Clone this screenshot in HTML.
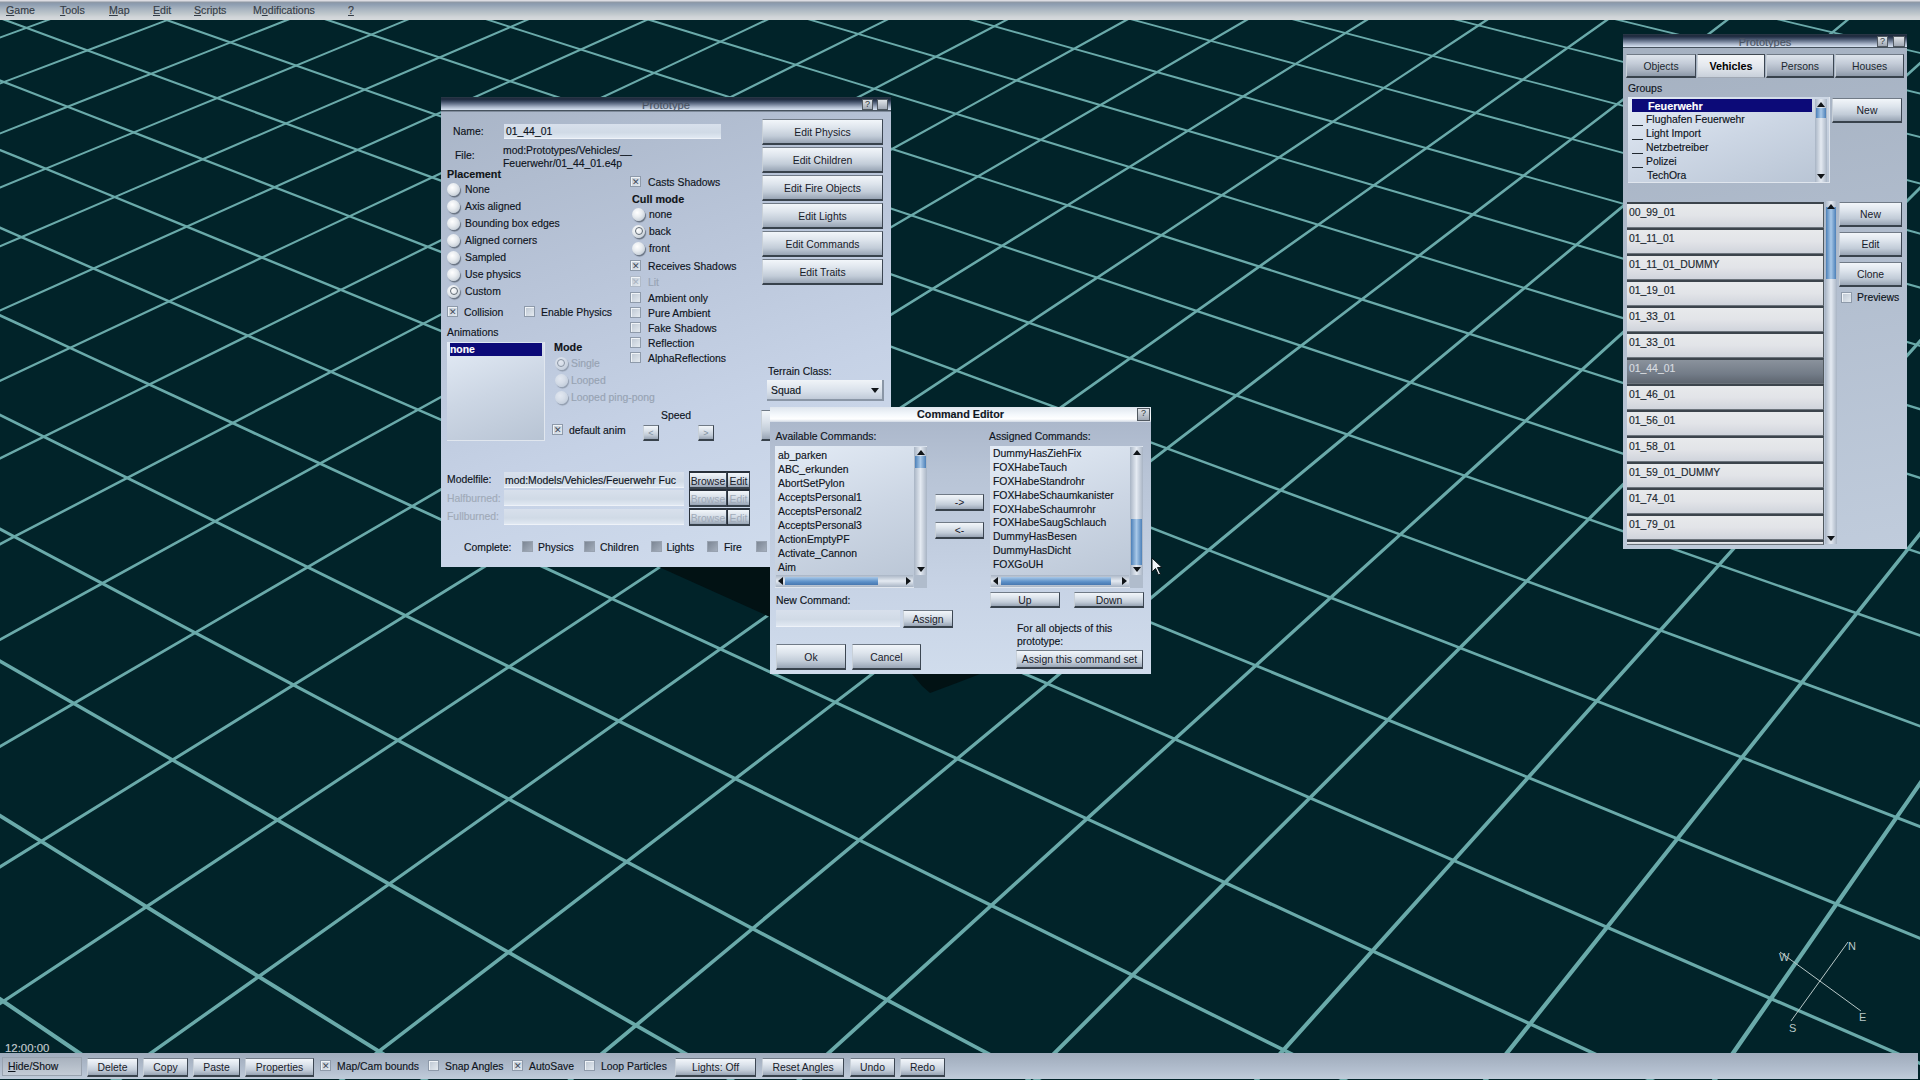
<!DOCTYPE html>
<html><head><meta charset="utf-8"><style>
*{margin:0;padding:0;box-sizing:border-box}
html,body{width:1920px;height:1080px;overflow:hidden;background:#012329;position:relative;font-family:"Liberation Sans",sans-serif;font-size:10.4px;color:#0e141c}
.t{-webkit-text-stroke:0.15px currentColor}
.t{position:absolute;white-space:nowrap}
.t u{text-decoration:underline}
div{position:absolute}
#menubar{left:0;top:0;width:1920px;height:20px;background:linear-gradient(to bottom,#dcdce2 0,#dcdce2 1px,#8e98a4 2px,#8c9cb0 4px,#a8b4c0 9px,#c0c8cc 14px,#d0d4d8 17px,#d6dadc 20px)}
.dlg{background:linear-gradient(160deg,#a8b4c6 0%,#b8c4d8 35%,#c6d2e6 65%,#d2deee 100%)}
.ce{background:linear-gradient(to bottom,#a8b4c8 0%,#b8c4d6 25%,#c8d4e6 70%,#d0dcec 100%);box-shadow:none}
.rp{background:linear-gradient(170deg,#a4b0c0 0%,#b2becf 50%,#c0ccdc 100%)}
.title.dark{background:linear-gradient(to bottom,#2c3a48 0px,#1c283c 2px,#34425a 4px,#6a7890 7px,#a8b4c8 10px,#d0dcec 12.5px,#46525e 13px,#46525e 14px,#b8c4d8 15px)}
.title.light{background:linear-gradient(to bottom,#dfe6ee 0%,#f4f8fc 50%,#ffffff 80%,#d0d8e4 100%)}
.tbtn{background:linear-gradient(to bottom,#e0e4e8,#a0a8b4);border:1px solid #505860;font-size:9px;line-height:9px;text-align:center;color:#303840}
.inp{background:linear-gradient(to bottom,#d8e0ec,#d0dae6 60%,#e0e8f2);border-bottom:1px solid #eef2f8}
.lst{background:linear-gradient(160deg,#e4ecf6 0%,#ccd6e4 50%,#b8c4d4 100%);border-right:1px solid #e0e6ee;border-bottom:1px solid #e0e6ee}
.selbar{background:#0c0a78}
.btn{background:linear-gradient(to bottom,#f2f6fa 0%,#dde4ec 35%,#c2ccd8 70%,#98a4b4 100%);border-top:1px solid #707a86;border-left:1px solid #c8d0d8;border-right:1px solid #3c4652;border-bottom:2px solid #38424c;text-align:center;white-space:nowrap;color:#18202a}
.btn.sm{font-size:9px;color:#8090a0}
.btn.sq{border-top:2px solid #28303a;border-left:1px solid #28303a}
.btn.dis{color:#a0aab8}
.btn.tab{background:linear-gradient(to bottom,#dde4ec 0%,#c4ccd8 40%,#a8b2c0 75%,#8c98a8 100%);color:#202830}
.btn.tabsel{background:linear-gradient(to bottom,#f4f6f8 0%,#e4e8ee 50%,#c8d0da 100%);color:#000;border-top:1px solid #404850;border-bottom:1px solid #a0a8b4}
.cb{background:linear-gradient(135deg,#bcc6d2,#e4eaf0);border:1px solid #8e9aaa;box-shadow:inset 1px 1px 0 #f0f4f8}
.cb span{position:absolute;left:1px;top:0px;font-size:9px;line-height:11px;color:#404a58}
.cb.dis span{color:#a8b2c0}
.cb.dis{border-color:#b0bac8}
.cb.grey{background:linear-gradient(135deg,#7c8694,#a4aebc);border-color:#98a2b0;box-shadow:none}
.rd{width:13px;height:13px;border-radius:50%;background:radial-gradient(circle at 40% 35%,#ffffff 0%,#e8ecf0 40%,#c8d0d8 75%,#8a94a0 100%);box-shadow:1px 1.5px 1px rgba(40,50,60,0.55)}
.rd.sel::after{content:"";position:absolute;left:2.5px;top:2.5px;width:6px;height:6px;border-radius:50%;border:1.5px solid #606a74}
.rd.dis{opacity:0.55}
.drop{background:linear-gradient(to bottom,#f0f4f8,#d8e0ea 60%,#c0cad8);border-bottom:2px solid #8a96a6;border-right:2px solid #8a96a6}
.arr{width:0;height:0;border-left:4px solid transparent;border-right:4px solid transparent;border-top:5px solid #101418}
.arru{width:0;height:0;border-left:4px solid transparent;border-right:4px solid transparent;border-bottom:5px solid #101418}
.arrl{width:0;height:0;border-top:4px solid transparent;border-bottom:4px solid transparent;border-right:5px solid #101418}
.arrr{width:0;height:0;border-top:4px solid transparent;border-bottom:4px solid transparent;border-left:5px solid #101418}
.vsb{background:linear-gradient(to right,#a8b4c4,#e4eaf2 50%,#a8b4c4)}
.hsb{background:linear-gradient(to bottom,#a8b4c4,#e4eaf2 50%,#a8b4c4)}
.thumbv{background:linear-gradient(to right,#4c80b8,#a8c8e8 50%,#4c80b8)}
.thumbh{background:linear-gradient(to bottom,#a8c8e8,#5c90c8 60%,#4878b0)}
.corner{background:#b0bccc}
.uline{background:#202830}
.row{background:linear-gradient(to bottom,#e8eaec 0%,#e2e4e8 50%,#d0d4dc 100%);border-top:2px solid #3c444c;border-bottom:1px solid #6c747c;border-right:1px solid #50585e}
.row.sel{background:linear-gradient(to bottom,#8a929c 0%,#737c88 60%,#5e6670 100%)}
#toolbar{left:0;top:1053px;width:1918px;height:26px;background:linear-gradient(to bottom,#a0acbc 0,#a8b4c4 8px,#b4c0d0 18px,#c0ccda 26px)}
.hide{background:linear-gradient(to bottom,#a8b2be,#c4ccd6);border:1px solid #98a2ae}
</style></head>
<body>
<svg width="1920" height="1080" style="position:absolute;left:0;top:0"><defs><filter id="bl" x="-1%" y="-1%" width="102%" height="102%"><feGaussianBlur stdDeviation="0.55"/></filter></defs><g filter="url(#bl)" fill="#6aaaaa"><path d="M2178.58 -301.39 L2180.96 -301.02 L2183.33 -300.64 L2185.71 -300.27 L2188.08 -299.89 L2190.47 -299.51 L2192.85 -299.14 L2195.23 -298.76 L2197.62 -298.38 L2200.01 -298.01 L2202.40 -297.63 L2204.79 -297.25 L2207.19 -296.87 L2209.59 -296.49 L2211.99 -296.11 L2214.39 -295.73 L2216.79 -295.35 L2219.20 -294.97 L2221.61 -294.59 L2224.02 -294.21 L2226.43 -293.83 L2228.84 -293.45 L2231.26 -293.06 L2233.68 -292.68 L2233.90 -294.10 L2231.48 -294.48 L2229.07 -294.86 L2226.65 -295.24 L2224.24 -295.63 L2221.83 -296.01 L2219.42 -296.39 L2217.01 -296.77 L2214.61 -297.15 L2212.21 -297.53 L2209.81 -297.91 L2207.41 -298.29 L2205.02 -298.66 L2202.62 -299.04 L2200.23 -299.42 L2197.84 -299.80 L2195.46 -300.18 L2193.07 -300.55 L2190.69 -300.93 L2188.31 -301.31 L2185.93 -301.68 L2183.55 -302.06 L2181.18 -302.43 L2178.81 -302.81Z M2060.72 -301.39 L2067.99 -300.21 L2075.28 -299.04 L2082.60 -297.85 L2089.93 -296.67 L2097.29 -295.48 L2104.66 -294.28 L2112.06 -293.09 L2119.48 -291.89 L2126.91 -290.68 L2134.37 -289.48 L2141.85 -288.27 L2149.36 -287.06 L2156.88 -285.84 L2164.42 -284.62 L2171.99 -283.39 L2179.57 -282.17 L2187.18 -280.94 L2194.81 -279.70 L2202.47 -278.47 L2210.14 -277.22 L2217.84 -275.98 L2225.55 -274.73 L2233.30 -273.48 L2233.53 -274.91 L2225.79 -276.16 L2218.07 -277.41 L2210.37 -278.65 L2202.70 -279.89 L2195.04 -281.13 L2187.41 -282.37 L2179.81 -283.60 L2172.22 -284.82 L2164.65 -286.05 L2157.11 -287.26 L2149.59 -288.48 L2142.08 -289.69 L2134.60 -290.90 L2127.14 -292.11 L2119.71 -293.31 L2112.29 -294.51 L2104.89 -295.71 L2097.52 -296.90 L2090.16 -298.09 L2082.83 -299.27 L2075.51 -300.46 L2068.22 -301.64 L2060.95 -302.81Z M1942.90 -301.39 L1954.86 -299.41 L1966.88 -297.42 L1978.95 -295.42 L1991.07 -293.42 L2003.26 -291.40 L2015.50 -289.38 L2027.80 -287.34 L2040.16 -285.29 L2052.58 -283.24 L2065.06 -281.17 L2077.60 -279.10 L2090.20 -277.02 L2102.86 -274.92 L2115.58 -272.82 L2128.36 -270.70 L2141.20 -268.57 L2154.11 -266.44 L2167.08 -264.29 L2180.11 -262.14 L2193.21 -259.97 L2206.37 -257.79 L2219.60 -255.60 L2232.89 -253.40 L2233.13 -254.85 L2219.84 -257.05 L2206.61 -259.24 L2193.45 -261.41 L2180.35 -263.58 L2167.32 -265.73 L2154.35 -267.88 L2141.44 -270.01 L2128.60 -272.14 L2115.81 -274.25 L2103.09 -276.36 L2090.43 -278.45 L2077.84 -280.54 L2065.30 -282.61 L2052.82 -284.67 L2040.40 -286.73 L2028.04 -288.77 L2015.74 -290.81 L2003.50 -292.83 L1991.31 -294.85 L1979.18 -296.85 L1967.11 -298.85 L1955.10 -300.84 L1943.14 -302.81Z M1825.15 -301.38 L1841.57 -298.60 L1858.11 -295.80 L1874.75 -292.98 L1891.50 -290.14 L1908.37 -287.29 L1925.35 -284.41 L1942.44 -281.52 L1959.65 -278.60 L1976.98 -275.67 L1994.42 -272.71 L2011.98 -269.74 L2029.67 -266.74 L2047.47 -263.73 L2065.40 -260.69 L2083.45 -257.63 L2101.62 -254.55 L2119.93 -251.45 L2138.36 -248.33 L2156.92 -245.19 L2175.61 -242.02 L2194.43 -238.83 L2213.38 -235.62 L2232.47 -232.39 L2232.72 -233.85 L2213.63 -237.08 L2194.68 -240.29 L2175.85 -243.48 L2157.16 -246.64 L2138.60 -249.79 L2120.17 -252.91 L2101.87 -256.01 L2083.69 -259.08 L2065.64 -262.14 L2047.72 -265.18 L2029.91 -268.19 L2012.23 -271.18 L1994.67 -274.16 L1977.22 -277.11 L1959.90 -280.04 L1942.69 -282.96 L1925.59 -285.85 L1908.61 -288.73 L1891.75 -291.58 L1874.99 -294.42 L1858.35 -297.24 L1841.81 -300.04 L1825.39 -302.82Z M1707.44 -301.38 L1728.26 -297.77 L1749.26 -294.13 L1770.44 -290.45 L1791.81 -286.75 L1813.36 -283.01 L1835.10 -279.24 L1857.03 -275.43 L1879.15 -271.59 L1901.47 -267.72 L1923.99 -263.81 L1946.71 -259.87 L1969.63 -255.89 L1992.76 -251.88 L2016.10 -247.83 L2039.66 -243.75 L2063.43 -239.62 L2087.41 -235.46 L2111.62 -231.26 L2136.06 -227.02 L2160.72 -222.74 L2185.61 -218.43 L2210.74 -214.07 L2236.10 -209.67 L2236.36 -211.14 L2210.99 -215.54 L2185.87 -219.90 L2160.97 -224.22 L2136.31 -228.49 L2111.88 -232.73 L2087.67 -236.93 L2063.68 -241.09 L2039.91 -245.21 L2016.36 -249.30 L1993.02 -253.34 L1969.89 -257.35 L1946.96 -261.33 L1924.24 -265.27 L1901.72 -269.17 L1879.40 -273.05 L1857.28 -276.88 L1835.35 -280.69 L1813.61 -284.45 L1792.06 -288.19 L1770.69 -291.90 L1749.51 -295.57 L1728.51 -299.21 L1707.69 -302.82Z M1589.79 -301.38 L1614.64 -296.96 L1639.75 -292.50 L1665.13 -287.98 L1690.78 -283.42 L1716.70 -278.82 L1742.90 -274.16 L1769.38 -269.45 L1796.15 -264.69 L1823.21 -259.88 L1850.57 -255.01 L1878.24 -250.10 L1906.21 -245.12 L1934.49 -240.09 L1963.09 -235.01 L1992.02 -229.87 L2021.27 -224.67 L2050.86 -219.41 L2080.79 -214.08 L2111.06 -208.70 L2141.69 -203.26 L2172.67 -197.75 L2204.02 -192.17 L2235.74 -186.54 L2236.01 -188.03 L2204.29 -193.67 L2172.94 -199.24 L2141.95 -204.75 L2111.32 -210.19 L2081.05 -215.57 L2051.12 -220.89 L2021.53 -226.15 L1992.28 -231.35 L1963.36 -236.49 L1934.75 -241.57 L1906.47 -246.59 L1878.50 -251.57 L1850.84 -256.48 L1823.47 -261.34 L1796.41 -266.15 L1769.64 -270.91 L1743.16 -275.62 L1716.96 -280.27 L1691.04 -284.88 L1665.39 -289.44 L1640.01 -293.95 L1614.90 -298.41 L1590.05 -302.83Z M1472.20 -301.37 L1500.86 -296.15 L1529.88 -290.86 L1559.26 -285.50 L1589.01 -280.08 L1619.14 -274.59 L1649.65 -269.02 L1680.56 -263.39 L1711.87 -257.68 L1743.58 -251.90 L1775.71 -246.04 L1808.27 -240.11 L1841.26 -234.09 L1874.69 -228.00 L1908.57 -221.82 L1942.91 -215.56 L1977.72 -209.21 L2013.01 -202.78 L2048.78 -196.26 L2085.06 -189.64 L2121.84 -182.94 L2159.15 -176.14 L2196.98 -169.24 L2235.36 -162.24 L2235.64 -163.76 L2197.26 -170.75 L2159.42 -177.65 L2122.12 -184.45 L2085.33 -191.15 L2049.06 -197.76 L2013.28 -204.28 L1977.99 -210.71 L1943.18 -217.05 L1908.84 -223.31 L1874.96 -229.48 L1841.53 -235.58 L1808.54 -241.59 L1775.98 -247.52 L1743.85 -253.38 L1712.14 -259.16 L1680.83 -264.86 L1649.92 -270.49 L1619.41 -276.05 L1589.28 -281.54 L1559.52 -286.97 L1530.14 -292.32 L1501.13 -297.61 L1472.47 -302.83Z M1354.66 -301.37 L1386.91 -295.34 L1419.63 -289.22 L1452.82 -283.01 L1486.50 -276.71 L1520.67 -270.32 L1555.35 -263.83 L1590.55 -257.25 L1626.27 -250.56 L1662.54 -243.78 L1699.37 -236.89 L1736.76 -229.89 L1774.73 -222.79 L1813.30 -215.58 L1852.47 -208.25 L1892.27 -200.80 L1932.70 -193.24 L1973.79 -185.55 L2015.54 -177.74 L2057.99 -169.80 L2101.13 -161.73 L2145.00 -153.53 L2189.60 -145.19 L2234.96 -136.70 L2235.25 -138.24 L2189.89 -146.72 L2145.28 -155.06 L2101.42 -163.26 L2058.27 -171.33 L2015.83 -179.26 L1974.07 -187.07 L1932.98 -194.75 L1892.55 -202.31 L1852.75 -209.75 L1813.58 -217.08 L1775.01 -224.29 L1737.04 -231.39 L1699.65 -238.38 L1662.82 -245.27 L1626.55 -252.05 L1590.82 -258.73 L1555.62 -265.31 L1520.94 -271.79 L1486.77 -278.18 L1453.09 -284.48 L1419.90 -290.69 L1387.19 -296.80 L1354.93 -302.83Z M1237.17 -301.37 L1272.80 -294.52 L1309.01 -287.57 L1345.81 -280.50 L1383.23 -273.31 L1421.27 -266.01 L1459.96 -258.58 L1499.31 -251.02 L1539.33 -243.33 L1580.05 -235.51 L1621.48 -227.55 L1663.65 -219.45 L1706.56 -211.21 L1750.25 -202.82 L1794.72 -194.28 L1840.01 -185.58 L1886.14 -176.72 L1933.13 -167.70 L1981.00 -158.50 L2029.78 -149.13 L2079.50 -139.58 L2130.18 -129.85 L2181.85 -119.93 L2234.54 -109.81 L2234.84 -111.37 L2182.15 -121.48 L2130.47 -131.40 L2079.79 -141.13 L2030.08 -150.68 L1981.30 -160.04 L1933.42 -169.23 L1886.44 -178.25 L1840.31 -187.11 L1795.01 -195.80 L1750.54 -204.34 L1706.85 -212.73 L1663.94 -220.96 L1621.77 -229.06 L1580.34 -237.01 L1539.62 -244.83 L1499.60 -252.51 L1460.25 -260.07 L1421.56 -267.49 L1383.52 -274.80 L1346.10 -281.98 L1309.29 -289.05 L1273.08 -296.00 L1237.46 -302.84Z M1119.74 -301.36 L1158.52 -293.71 L1198.01 -285.92 L1238.23 -277.98 L1279.20 -269.89 L1320.94 -261.66 L1363.48 -253.26 L1406.83 -244.71 L1451.02 -235.99 L1496.08 -227.09 L1542.02 -218.03 L1588.88 -208.78 L1636.69 -199.35 L1685.47 -189.72 L1735.26 -179.89 L1786.07 -169.87 L1837.96 -159.63 L1890.95 -149.17 L1945.07 -138.49 L2000.37 -127.58 L2056.88 -116.42 L2114.64 -105.03 L2173.70 -93.37 L2234.09 -81.45 L2234.40 -83.04 L2174.01 -94.95 L2114.95 -106.60 L2057.19 -117.99 L2000.68 -129.14 L1945.38 -140.05 L1891.25 -150.72 L1838.27 -161.17 L1786.38 -171.41 L1735.56 -181.43 L1685.77 -191.25 L1636.99 -200.87 L1589.19 -210.30 L1542.32 -219.55 L1496.38 -228.61 L1451.32 -237.50 L1407.13 -246.21 L1363.78 -254.77 L1321.24 -263.16 L1279.50 -271.39 L1238.53 -279.47 L1198.31 -287.40 L1158.81 -295.19 L1120.03 -302.84Z M1002.36 -301.36 L1044.20 -292.87 L1086.90 -284.20 L1130.47 -275.36 L1174.94 -266.34 L1220.34 -257.13 L1266.71 -247.72 L1314.07 -238.11 L1362.46 -228.29 L1411.91 -218.25 L1462.45 -208.00 L1514.12 -197.51 L1566.96 -186.79 L1621.01 -175.82 L1676.31 -164.60 L1732.91 -153.12 L1790.85 -141.36 L1850.18 -129.32 L1910.95 -116.99 L1973.22 -104.35 L2037.03 -91.41 L2102.46 -78.13 L2169.55 -64.52 L2238.38 -50.55 L2238.70 -52.16 L2169.87 -66.12 L2102.78 -79.73 L2037.36 -93.00 L1973.54 -105.94 L1911.27 -118.57 L1850.50 -130.89 L1791.17 -142.93 L1733.23 -154.68 L1676.63 -166.16 L1621.33 -177.37 L1567.27 -188.34 L1514.43 -199.05 L1462.76 -209.53 L1412.22 -219.78 L1362.77 -229.81 L1314.38 -239.63 L1267.02 -249.23 L1220.65 -258.64 L1175.24 -267.85 L1130.77 -276.87 L1087.20 -285.70 L1044.51 -294.36 L1002.67 -302.85Z M885.04 -301.35 L929.59 -292.05 L975.14 -282.54 L1021.71 -272.81 L1069.35 -262.87 L1118.09 -252.69 L1167.96 -242.28 L1219.01 -231.62 L1271.28 -220.70 L1324.82 -209.52 L1379.67 -198.07 L1435.87 -186.33 L1493.49 -174.30 L1552.57 -161.97 L1613.17 -149.31 L1675.36 -136.33 L1739.18 -123.00 L1804.72 -109.31 L1872.04 -95.26 L1941.20 -80.82 L2012.30 -65.97 L2085.41 -50.70 L2160.62 -35.00 L2238.02 -18.84 L2238.36 -20.48 L2160.96 -36.63 L2085.75 -52.33 L2012.64 -67.59 L1941.54 -82.42 L1872.37 -96.86 L1805.05 -110.91 L1739.52 -124.59 L1675.69 -137.91 L1613.50 -150.89 L1552.90 -163.53 L1493.81 -175.87 L1436.20 -187.89 L1379.99 -199.62 L1325.14 -211.07 L1271.60 -222.24 L1219.33 -233.15 L1168.28 -243.81 L1118.40 -254.21 L1069.67 -264.39 L1022.03 -274.33 L975.46 -284.05 L929.91 -293.55 L885.35 -302.85Z M767.77 -301.35 L814.82 -291.23 L863.00 -280.87 L912.38 -270.25 L962.98 -259.37 L1014.85 -248.21 L1068.05 -236.77 L1122.62 -225.04 L1178.63 -212.99 L1236.12 -200.63 L1295.15 -187.93 L1355.79 -174.89 L1418.11 -161.49 L1482.18 -147.71 L1548.06 -133.54 L1615.85 -118.97 L1685.61 -103.96 L1757.45 -88.51 L1831.45 -72.60 L1907.72 -56.20 L1986.36 -39.29 L2067.47 -21.84 L2151.19 -3.84 L2237.63 14.75 L2237.99 13.08 L2151.55 -5.50 L2067.83 -23.50 L1986.71 -40.93 L1908.07 -57.83 L1831.80 -74.23 L1757.80 -90.13 L1685.96 -105.57 L1616.19 -120.57 L1548.41 -135.14 L1482.52 -149.30 L1418.45 -163.07 L1356.13 -176.47 L1295.49 -189.50 L1236.45 -202.19 L1178.96 -214.55 L1122.96 -226.58 L1068.38 -238.31 L1015.18 -249.75 L963.31 -260.90 L912.70 -271.78 L863.33 -282.39 L815.14 -292.75 L768.09 -302.86Z M650.55 -301.34 L699.87 -290.41 L750.48 -279.19 L802.44 -267.67 L855.80 -255.84 L910.62 -243.69 L966.96 -231.20 L1024.88 -218.36 L1084.46 -205.16 L1145.75 -191.57 L1208.85 -177.58 L1273.82 -163.18 L1340.76 -148.34 L1409.75 -133.05 L1480.89 -117.28 L1554.28 -101.01 L1630.04 -84.21 L1708.27 -66.87 L1789.10 -48.95 L1872.67 -30.43 L1959.11 -11.26 L2048.57 8.57 L2141.22 29.11 L2237.23 50.39 L2237.60 48.68 L2141.59 27.41 L2048.94 6.88 L1959.48 -12.94 L1873.04 -32.09 L1789.47 -50.60 L1708.63 -68.51 L1630.40 -85.85 L1554.64 -102.63 L1481.25 -118.89 L1410.10 -134.65 L1341.11 -149.94 L1274.17 -164.77 L1209.20 -179.17 L1146.10 -193.15 L1084.80 -206.73 L1025.23 -219.93 L967.31 -232.76 L910.97 -245.24 L856.15 -257.39 L802.78 -269.21 L750.82 -280.72 L700.21 -291.94 L650.89 -302.86Z M533.39 -301.34 L584.76 -289.59 L637.58 -277.51 L691.91 -265.08 L747.83 -252.29 L805.39 -239.13 L864.68 -225.57 L925.76 -211.59 L988.74 -197.19 L1053.68 -182.34 L1120.70 -167.01 L1189.88 -151.18 L1261.34 -134.84 L1335.19 -117.95 L1411.55 -100.48 L1490.55 -82.41 L1572.34 -63.71 L1657.05 -44.33 L1744.86 -24.25 L1835.93 -3.42 L1930.46 18.20 L2028.63 40.66 L2130.66 63.99 L2236.79 88.27 L2237.19 86.53 L2131.06 62.26 L2029.02 38.94 L1930.85 16.50 L1836.32 -5.11 L1745.25 -25.93 L1657.44 -46.00 L1572.72 -65.37 L1490.93 -84.06 L1411.93 -102.12 L1335.56 -119.58 L1261.71 -136.46 L1190.25 -152.80 L1121.06 -168.61 L1054.05 -183.93 L989.10 -198.78 L926.12 -213.17 L865.03 -227.14 L805.75 -240.69 L748.18 -253.85 L692.27 -266.63 L637.93 -279.05 L585.11 -291.13 L533.74 -302.87Z M416.28 -301.33 L469.48 -288.77 L524.29 -275.82 L580.78 -262.47 L639.04 -248.71 L699.13 -234.52 L761.17 -219.86 L825.23 -204.73 L891.42 -189.09 L959.86 -172.93 L1030.64 -156.21 L1103.91 -138.90 L1179.78 -120.98 L1258.41 -102.40 L1339.94 -83.14 L1424.55 -63.16 L1512.39 -42.40 L1603.68 -20.84 L1698.60 1.58 L1797.39 24.92 L1900.29 49.23 L2007.55 74.56 L2119.46 101.00 L2236.33 128.61 L2236.76 126.82 L2119.88 99.23 L2007.96 72.81 L1900.70 47.49 L1797.80 23.19 L1699.01 -0.13 L1604.08 -22.54 L1512.79 -44.09 L1424.94 -64.83 L1340.34 -84.81 L1258.80 -104.05 L1180.17 -122.62 L1104.29 -140.53 L1031.03 -157.83 L960.24 -174.54 L891.80 -190.70 L825.61 -206.33 L761.54 -221.45 L699.51 -236.10 L639.41 -250.28 L581.15 -264.04 L524.66 -277.37 L469.85 -290.31 L416.65 -302.87Z M299.23 -301.33 L354.14 -287.91 L410.83 -274.07 L469.38 -259.77 L529.88 -244.99 L592.44 -229.71 L657.16 -213.91 L724.16 -197.55 L793.55 -180.60 L865.47 -163.03 L940.05 -144.82 L1017.46 -125.91 L1097.85 -106.28 L1181.40 -85.87 L1268.30 -64.65 L1358.75 -42.56 L1452.97 -19.55 L1551.22 4.45 L1653.74 29.49 L1760.83 55.64 L1872.80 82.99 L1989.99 111.61 L2112.78 141.60 L2241.56 173.05 L2242.01 171.22 L2113.22 139.79 L1990.43 109.82 L1873.24 81.21 L1761.26 53.88 L1654.17 27.74 L1551.64 2.72 L1453.39 -21.26 L1359.16 -44.26 L1268.71 -66.34 L1181.81 -87.55 L1098.26 -107.94 L1017.86 -127.57 L940.46 -146.46 L865.87 -164.67 L793.94 -182.22 L724.55 -199.16 L657.55 -215.51 L592.83 -231.31 L530.27 -246.58 L469.77 -261.35 L411.21 -275.64 L354.52 -289.48 L299.61 -302.88Z M182.23 -301.32 L238.53 -287.09 L296.76 -272.37 L357.02 -257.13 L419.42 -241.36 L484.09 -225.01 L551.13 -208.06 L620.69 -190.48 L692.92 -172.22 L767.96 -153.25 L845.98 -133.53 L927.17 -113.00 L1011.73 -91.63 L1099.86 -69.35 L1191.80 -46.11 L1287.80 -21.84 L1388.14 3.53 L1493.12 30.07 L1603.06 57.86 L1718.32 87.00 L1839.31 117.58 L1966.47 149.73 L2100.26 183.55 L2241.23 219.19 L2241.71 217.31 L2100.73 181.69 L1966.93 147.89 L1839.77 115.77 L1718.78 85.20 L1603.51 56.08 L1493.56 28.30 L1388.58 1.78 L1288.24 -23.57 L1192.23 -47.82 L1100.29 -71.05 L1012.16 -93.32 L927.60 -114.68 L846.40 -135.19 L768.37 -154.91 L693.33 -173.86 L621.11 -192.11 L551.54 -209.69 L484.49 -226.62 L419.83 -242.96 L357.42 -258.73 L297.16 -273.95 L238.92 -288.66 L182.62 -302.89Z M65.28 -301.31 L122.74 -286.26 L182.29 -270.66 L244.04 -254.48 L308.12 -237.70 L374.66 -220.26 L443.81 -202.15 L515.72 -183.31 L590.57 -163.70 L668.53 -143.28 L749.81 -121.98 L834.61 -99.77 L923.18 -76.56 L1015.78 -52.31 L1112.67 -26.92 L1214.18 -0.33 L1320.63 27.56 L1432.39 56.84 L1549.89 87.62 L1673.56 120.02 L1803.90 154.17 L1941.48 190.21 L2086.91 228.31 L2240.88 268.64 L2241.39 266.72 L2087.41 226.40 L1941.97 188.33 L1804.39 152.31 L1674.04 118.18 L1550.36 85.80 L1432.87 55.04 L1321.09 25.78 L1214.64 -2.09 L1113.13 -28.67 L1016.23 -54.04 L923.63 -78.28 L835.06 -101.47 L750.25 -123.67 L668.97 -144.95 L591.01 -165.36 L516.16 -184.96 L444.24 -203.79 L375.09 -221.89 L308.54 -239.31 L244.46 -256.09 L182.71 -272.26 L123.16 -287.85 L65.69 -302.89Z M-51.61 -301.31 L6.79 -285.43 L67.43 -268.95 L130.44 -251.82 L195.96 -234.00 L264.15 -215.47 L335.18 -196.16 L409.22 -176.03 L486.46 -155.03 L567.13 -133.10 L651.46 -110.18 L739.69 -86.19 L832.11 -61.07 L929.03 -34.72 L1030.77 -7.06 L1137.71 22.01 L1250.26 52.60 L1368.87 84.85 L1494.05 118.88 L1626.34 154.84 L1766.39 192.91 L1914.89 233.28 L2072.63 276.16 L2240.50 321.80 L2241.04 319.81 L2073.16 274.20 L1915.42 231.35 L1766.91 191.01 L1626.85 152.96 L1494.55 117.02 L1369.37 83.01 L1250.76 50.79 L1138.20 20.21 L1031.25 -8.84 L929.51 -36.48 L832.59 -62.81 L740.16 -87.92 L651.92 -111.89 L567.59 -134.80 L486.92 -156.72 L409.67 -177.70 L335.63 -197.82 L264.60 -217.11 L196.41 -235.64 L130.88 -253.44 L67.86 -270.56 L7.22 -287.03 L-51.18 -302.90Z M-168.46 -301.30 L-109.34 -284.60 L-47.83 -267.23 L16.21 -249.14 L82.94 -230.28 L152.55 -210.62 L225.21 -190.10 L301.14 -168.65 L380.55 -146.21 L463.70 -122.72 L550.86 -98.10 L642.32 -72.27 L738.41 -45.12 L839.48 -16.57 L945.95 13.50 L1058.24 45.22 L1176.86 78.73 L1302.35 114.18 L1435.33 151.74 L1576.48 191.62 L1726.59 234.02 L1886.54 279.21 L2057.33 327.45 L2240.09 379.08 L2240.67 377.03 L2057.90 325.43 L1887.10 277.22 L1727.15 232.07 L1577.03 189.69 L1435.86 149.84 L1302.88 112.30 L1177.38 76.87 L1058.76 43.39 L946.46 11.69 L839.99 -18.37 L738.91 -46.90 L642.82 -74.03 L551.35 -99.84 L464.19 -124.45 L381.03 -147.92 L301.61 -170.34 L225.68 -191.78 L153.02 -212.29 L83.41 -231.94 L16.67 -250.78 L-47.37 -268.86 L-108.88 -286.22 L-168.00 -302.91Z M-285.24 -301.29 L-225.54 -283.74 L-163.31 -265.44 L-98.37 -246.35 L-30.55 -226.42 L40.35 -205.57 L114.54 -183.76 L192.25 -160.92 L273.75 -136.96 L359.32 -111.80 L449.27 -85.36 L543.95 -57.52 L643.73 -28.19 L749.04 2.77 L860.36 35.50 L978.22 70.14 L1103.20 106.89 L1235.98 145.92 L1377.30 187.47 L1528.02 231.78 L1689.11 279.14 L1861.68 329.87 L2047.00 384.35 L2246.53 443.01 L2247.16 440.88 L2047.61 382.26 L1862.28 327.82 L1689.70 277.12 L1528.60 229.79 L1377.87 185.51 L1236.54 144.00 L1103.76 104.99 L978.77 68.27 L860.91 33.65 L749.58 0.94 L644.26 -30.00 L544.47 -59.31 L449.79 -87.13 L359.84 -113.55 L274.26 -138.69 L192.76 -162.63 L115.04 -185.47 L40.84 -207.26 L-30.06 -228.09 L-97.88 -248.02 L-162.82 -267.09 L-225.06 -285.38 L-284.77 -302.92Z M-307.35 -272.29 L-247.59 -253.97 L-185.26 -234.87 L-120.20 -214.93 L-52.23 -194.10 L18.86 -172.32 L93.28 -149.51 L171.28 -125.61 L253.11 -100.53 L339.07 -74.19 L429.48 -46.48 L524.69 -17.30 L625.10 13.47 L731.14 45.96 L843.30 80.33 L962.13 116.75 L1088.24 155.40 L1222.32 196.48 L1365.15 240.25 L1517.61 286.98 L1680.71 336.96 L1855.62 390.56 L2043.65 448.18 L2246.34 510.30 L2247.02 508.09 L2044.31 446.02 L1856.27 388.44 L1681.35 334.87 L1518.23 284.92 L1365.76 238.24 L1222.93 194.50 L1088.84 153.44 L962.72 114.82 L843.89 78.43 L731.72 44.08 L625.67 11.61 L525.26 -19.14 L430.04 -48.30 L339.62 -75.99 L253.66 -102.31 L171.82 -127.37 L93.82 -151.26 L19.39 -174.05 L-51.70 -195.82 L-119.68 -216.63 L-184.74 -236.56 L-247.07 -255.64 L-306.84 -273.95Z M-308.28 -233.95 L-248.52 -214.82 L-186.19 -194.88 L-121.13 -174.06 L-53.15 -152.30 L17.94 -129.55 L92.37 -105.73 L170.37 -80.77 L252.21 -54.58 L338.19 -27.07 L428.61 1.87 L523.84 32.34 L624.26 64.48 L730.33 98.42 L842.52 134.33 L961.38 172.36 L1087.52 212.73 L1221.64 255.65 L1364.52 301.38 L1517.04 350.18 L1680.22 402.40 L1855.20 458.40 L2043.33 518.60 L2246.13 583.51 L2246.86 581.21 L2044.04 516.35 L1855.91 456.20 L1680.91 400.24 L1517.72 348.06 L1365.19 299.28 L1222.30 253.59 L1088.17 210.70 L962.02 170.36 L843.15 132.35 L730.95 96.48 L624.88 62.56 L524.44 30.44 L429.21 -0.01 L338.78 -28.92 L252.80 -56.42 L170.95 -82.59 L92.94 -107.53 L18.51 -131.33 L-52.58 -154.07 L-120.57 -175.81 L-185.63 -196.61 L-247.97 -216.54 L-307.74 -235.66Z M-307.12 -191.38 L-247.36 -171.37 L-185.03 -150.51 L-119.98 -128.72 L-52.02 -105.97 L19.06 -82.17 L93.47 -57.25 L171.45 -31.14 L253.27 -3.75 L339.22 25.03 L429.61 55.30 L524.80 87.17 L625.19 120.78 L731.20 156.28 L843.34 193.83 L962.14 233.61 L1088.21 275.82 L1222.25 320.70 L1365.03 368.51 L1517.44 419.54 L1680.49 474.13 L1855.33 532.68 L2043.29 595.61 L2245.90 663.45 L2246.70 661.05 L2044.07 593.26 L1856.10 530.38 L1681.25 471.88 L1518.18 417.33 L1365.76 366.33 L1222.97 318.56 L1088.92 273.71 L962.83 231.53 L844.02 191.78 L731.88 154.26 L625.85 118.79 L525.46 85.20 L430.26 53.36 L339.86 23.11 L253.91 -5.64 L172.08 -33.02 L94.09 -59.11 L19.67 -84.01 L-51.41 -107.79 L-119.38 -130.53 L-184.44 -152.29 L-246.76 -173.14 L-306.53 -193.14Z M-308.12 -145.47 L-248.37 -124.49 L-186.04 -102.61 L-120.99 -79.77 L-53.02 -55.91 L18.06 -30.95 L92.47 -4.83 L170.46 22.56 L252.29 51.28 L338.25 81.46 L428.66 113.20 L523.87 146.63 L624.27 181.88 L730.31 219.11 L842.48 258.48 L961.31 300.20 L1087.42 344.48 L1221.50 391.55 L1364.34 441.70 L1516.81 495.23 L1679.93 552.50 L1854.86 613.91 L2042.91 679.93 L2245.64 751.10 L2246.52 748.59 L2043.78 677.48 L1855.70 611.51 L1680.76 550.14 L1517.62 492.92 L1365.14 439.43 L1222.29 389.32 L1088.19 342.28 L962.06 298.04 L843.22 256.36 L731.05 217.01 L625.00 179.81 L524.58 144.59 L429.36 111.18 L338.95 79.47 L252.98 49.32 L171.15 20.61 L93.15 -6.75 L18.73 -32.86 L-52.36 -57.79 L-120.34 -81.63 L-185.40 -104.46 L-247.72 -126.32 L-307.49 -147.28Z M-309.24 -94.93 L-249.48 -72.88 L-187.16 -49.89 L-122.10 -25.88 L-54.13 -0.81 L16.96 25.42 L91.38 52.88 L169.38 81.66 L251.21 111.86 L337.18 143.58 L427.61 176.94 L522.83 212.08 L623.26 249.13 L729.33 288.27 L841.52 329.67 L960.39 373.53 L1086.54 420.07 L1220.68 469.57 L1363.57 522.29 L1516.11 578.57 L1679.32 638.79 L1854.33 703.37 L2042.50 772.80 L2245.35 847.64 L2246.32 845.00 L2043.45 770.22 L1855.26 700.84 L1680.23 636.32 L1517.01 576.15 L1364.45 519.91 L1221.54 467.23 L1087.39 417.78 L961.22 371.27 L842.34 327.44 L730.14 286.08 L624.06 246.98 L523.62 209.95 L428.38 174.84 L337.95 141.51 L251.97 109.81 L170.12 79.64 L92.12 50.88 L17.68 23.45 L-53.41 -2.76 L-121.39 -27.82 L-186.45 -51.80 L-248.78 -74.78 L-308.54 -96.81Z M-310.47 -39.04 L-250.60 -15.77 L-188.15 8.51 L-122.96 33.86 L-54.84 60.34 L16.42 88.04 L91.02 117.05 L169.22 147.45 L251.28 179.35 L337.49 212.87 L428.18 248.13 L523.71 285.27 L624.47 324.44 L730.90 365.82 L843.50 409.60 L962.82 455.99 L1089.48 505.23 L1224.18 557.60 L1367.71 613.40 L1520.97 672.98 L1684.98 736.75 L1860.91 805.15 L2050.11 878.70 L2254.15 958.03 L2255.23 955.24 L2051.17 875.98 L1861.94 802.48 L1685.99 734.14 L1521.96 670.43 L1368.69 610.90 L1225.14 555.15 L1090.42 502.82 L963.74 453.62 L844.41 407.27 L731.79 363.53 L625.34 322.18 L524.57 283.04 L429.04 245.94 L338.33 210.71 L252.11 177.22 L170.04 145.34 L91.83 114.96 L17.22 85.98 L-54.04 58.31 L-122.17 31.84 L-187.37 6.52 L-249.83 -17.74 L-309.71 -41.00Z M-309.17 24.20 L-249.30 48.79 L-186.86 74.45 L-121.67 101.23 L-53.55 129.21 L17.69 158.48 L92.28 189.12 L170.47 221.24 L252.51 254.95 L338.71 290.36 L429.38 327.61 L524.87 366.84 L625.60 408.22 L732.00 451.93 L844.55 498.17 L963.83 547.17 L1090.43 599.18 L1225.06 654.49 L1368.51 713.43 L1521.67 776.35 L1685.57 843.68 L1861.38 915.91 L2050.44 993.58 L2254.30 1077.33 L2255.51 1074.37 L2051.62 990.69 L1862.54 913.09 L1686.71 840.93 L1522.78 773.66 L1369.59 710.79 L1226.12 651.91 L1091.47 596.64 L964.85 544.68 L845.56 495.72 L732.99 449.52 L626.58 405.85 L525.83 364.50 L430.32 325.31 L339.64 288.09 L253.43 252.71 L171.38 219.03 L93.18 186.94 L18.57 156.32 L-52.68 127.08 L-120.80 99.12 L-186.00 72.36 L-248.46 46.73 L-308.34 22.16Z M-310.55 93.84 L-250.67 119.91 L-188.22 147.11 L-123.03 175.50 L-54.90 205.17 L16.36 236.21 L90.97 268.70 L169.18 302.76 L251.25 338.50 L337.47 376.05 L428.17 415.55 L523.71 457.16 L624.48 501.05 L730.93 547.41 L843.54 596.45 L962.88 648.42 L1089.56 703.59 L1224.29 762.27 L1367.84 824.79 L1521.13 891.54 L1685.17 962.98 L1861.14 1039.62 L2050.38 1122.03 L2254.47 1210.91 L2255.84 1207.77 L2051.72 1118.97 L1862.44 1036.62 L1686.44 960.06 L1522.37 888.68 L1369.06 821.99 L1225.48 759.53 L1090.73 700.91 L964.03 645.79 L844.67 593.86 L732.03 544.86 L625.57 498.54 L524.78 454.70 L429.23 413.13 L338.51 373.66 L252.27 336.15 L170.19 300.44 L91.97 266.41 L17.35 233.94 L-53.93 202.94 L-122.06 173.30 L-187.27 144.93 L-249.74 117.76 L-309.62 91.70Z M-312.11 172.26 L-252.23 200.00 L-189.76 228.94 L-124.56 259.16 L-56.42 290.73 L14.86 323.75 L89.49 358.33 L167.72 394.58 L249.82 432.61 L336.07 472.58 L426.81 514.62 L522.39 558.91 L623.21 605.62 L729.72 654.97 L842.40 707.18 L961.82 762.50 L1088.59 821.24 L1223.41 883.71 L1367.09 950.28 L1520.51 1021.36 L1684.71 1097.44 L1860.86 1179.06 L2050.31 1266.84 L2254.65 1361.51 L2256.21 1358.14 L2051.83 1263.56 L1862.34 1175.86 L1686.15 1094.32 L1521.92 1018.31 L1368.47 947.30 L1224.76 880.79 L1089.91 818.38 L963.11 759.70 L843.67 704.42 L730.97 652.26 L624.44 602.96 L523.60 556.29 L428.00 512.05 L337.24 470.05 L250.97 430.12 L168.86 392.12 L90.61 355.91 L15.96 321.36 L-55.33 288.37 L-123.48 256.83 L-188.70 226.65 L-251.17 197.73 L-311.07 170.01Z M-310.67 262.82 L-254.28 290.73 L-195.61 319.77 L-134.51 350.01 L-70.84 381.53 L-4.42 414.40 L64.92 448.71 L137.37 484.58 L213.17 522.09 L292.53 561.37 L375.73 602.55 L463.04 645.76 L554.78 691.16 L651.29 738.93 L752.96 789.25 L860.20 842.33 L973.50 898.40 L1093.38 957.74 L1220.43 1020.62 L1355.31 1087.37 L1498.77 1158.38 L1651.66 1234.04 L1814.93 1314.85 L1989.68 1401.34 L1991.41 1397.85 L1816.62 1311.44 L1653.30 1230.71 L1500.38 1155.12 L1356.89 1084.19 L1221.97 1017.50 L1094.89 954.68 L974.99 895.40 L861.66 839.38 L754.39 786.36 L652.70 736.09 L556.16 688.37 L464.40 643.01 L377.07 599.84 L293.85 558.70 L214.47 519.46 L138.66 481.98 L66.18 446.16 L-3.17 411.87 L-69.61 379.04 L-133.29 347.55 L-194.40 317.34 L-253.09 288.33 L-309.50 260.45Z M-312.48 364.88 L-261.30 392.06 L-208.24 420.24 L-153.20 449.48 L-96.07 479.82 L-36.71 511.35 L24.99 544.12 L89.18 578.21 L156.01 613.71 L225.66 650.71 L298.30 689.29 L374.13 729.56 L453.36 771.65 L536.24 815.67 L623.01 861.76 L713.96 910.06 L809.39 960.75 L909.65 1014.01 L1015.11 1070.02 L1126.20 1129.02 L1243.36 1191.25 L1367.11 1256.98 L1498.03 1326.52 L1636.76 1400.21 L1638.66 1396.62 L1499.89 1323.01 L1368.94 1253.55 L1245.15 1187.88 L1127.95 1125.72 L1016.84 1066.78 L911.34 1010.82 L811.05 957.62 L715.59 906.98 L624.62 858.72 L537.82 812.68 L454.92 768.71 L375.67 726.67 L299.81 686.43 L227.15 647.89 L157.49 610.94 L90.63 575.47 L26.42 541.41 L-35.30 508.68 L-94.66 477.18 L-151.81 446.87 L-206.87 417.66 L-259.94 389.51 L-311.14 362.36Z M-314.57 482.82 L-269.38 508.71 L-222.73 535.45 L-174.55 563.06 L-124.76 591.59 L-73.28 621.09 L-20.01 651.62 L35.12 683.21 L92.23 715.94 L151.43 749.86 L212.81 785.04 L276.53 821.55 L342.70 859.47 L411.47 898.88 L483.00 939.87 L557.45 982.54 L635.02 1026.99 L715.90 1073.34 L800.31 1121.71 L888.48 1172.23 L980.67 1225.06 L1077.16 1280.36 L1178.26 1338.30 L1284.31 1399.07 L1286.41 1395.40 L1180.33 1334.69 L1079.19 1276.81 L982.66 1221.58 L890.44 1168.80 L802.24 1118.33 L717.81 1070.01 L636.90 1023.72 L559.30 979.31 L484.82 936.69 L413.26 895.74 L344.47 856.37 L278.28 818.50 L214.54 782.02 L153.13 746.88 L93.92 713.00 L36.79 680.31 L-18.37 648.74 L-71.65 618.25 L-123.15 588.78 L-172.96 560.28 L-221.16 532.70 L-267.82 505.99 L-313.03 480.13Z M-317.02 620.68 L-278.80 644.46 L-239.53 668.89 L-199.17 693.99 L-157.68 719.80 L-115.01 746.35 L-71.11 773.66 L-25.92 801.78 L20.61 830.72 L68.55 860.55 L117.95 891.28 L168.90 922.98 L221.45 955.67 L275.70 989.42 L331.71 1024.27 L389.59 1060.27 L449.41 1097.49 L511.30 1135.99 L575.34 1175.84 L641.66 1217.10 L710.38 1259.85 L781.64 1304.18 L855.57 1350.18 L932.33 1397.93 L934.67 1394.17 L857.87 1346.47 L783.91 1300.53 L712.62 1256.25 L643.87 1213.54 L577.52 1172.33 L513.45 1132.53 L451.54 1094.07 L391.69 1056.89 L333.79 1020.93 L277.75 986.12 L223.48 952.41 L170.90 919.75 L119.94 888.09 L70.51 857.39 L22.55 827.60 L-24.00 798.68 L-69.21 770.60 L-113.13 743.32 L-155.82 716.80 L-197.32 691.02 L-237.69 665.94 L-276.98 641.54 L-315.22 617.78Z M-315.55 786.94 L-285.42 807.44 L-254.64 828.38 L-223.20 849.77 L-191.07 871.63 L-158.22 893.98 L-124.64 916.82 L-90.30 940.19 L-55.17 964.09 L-19.23 988.54 L17.56 1013.57 L55.22 1039.19 L93.78 1065.43 L133.28 1092.30 L173.76 1119.84 L215.24 1148.06 L257.77 1177.00 L301.39 1206.68 L346.14 1237.12 L392.06 1268.36 L439.20 1300.43 L487.61 1333.37 L537.34 1367.21 L588.45 1401.98 L591.06 1398.14 L539.92 1363.40 L490.16 1329.61 L441.73 1296.71 L394.56 1264.67 L348.62 1233.47 L303.85 1203.06 L260.21 1173.42 L217.65 1144.52 L176.15 1116.32 L135.65 1088.82 L96.13 1061.97 L57.54 1035.77 L19.86 1010.17 L-16.94 985.18 L-52.91 960.75 L-88.05 936.88 L-122.41 913.54 L-156.01 890.72 L-188.87 868.40 L-221.02 846.56 L-252.48 825.20 L-283.27 804.28 L-313.42 783.81Z M-318.64 984.02 L-298.30 999.28 L-277.67 1014.77 L-256.74 1030.48 L-235.50 1046.42 L-213.95 1062.59 L-192.08 1079.01 L-169.88 1095.67 L-147.35 1112.58 L-124.47 1129.75 L-101.25 1147.18 L-77.66 1164.89 L-53.71 1182.87 L-29.38 1201.13 L-4.67 1219.68 L20.44 1238.52 L45.95 1257.67 L71.88 1277.12 L98.22 1296.90 L125.00 1317.00 L152.23 1337.44 L179.91 1358.21 L208.06 1379.34 L236.69 1400.83 L239.61 1396.92 L210.97 1375.46 L182.80 1354.36 L155.10 1333.61 L127.86 1313.20 L101.06 1293.12 L74.69 1273.37 L48.75 1253.93 L23.22 1234.81 L-1.90 1215.99 L-26.63 1197.46 L-50.97 1179.22 L-74.94 1161.26 L-98.54 1143.58 L-121.79 1126.17 L-144.68 1109.02 L-167.23 1092.13 L-189.44 1075.49 L-211.33 1059.09 L-232.89 1042.93 L-254.14 1027.01 L-275.09 1011.32 L-295.73 995.86 L-316.08 980.61Z M-322.44 1225.74 L-314.00 1232.80 L-305.50 1239.91 L-296.96 1247.06 L-288.36 1254.26 L-279.71 1261.49 L-271.01 1268.77 L-262.26 1276.10 L-253.45 1283.47 L-244.59 1290.88 L-235.68 1298.35 L-226.71 1305.85 L-217.68 1313.40 L-208.60 1321.00 L-199.47 1328.65 L-190.27 1336.34 L-181.02 1344.09 L-171.71 1351.88 L-162.35 1359.72 L-152.92 1367.61 L-143.44 1375.54 L-133.89 1383.53 L-124.28 1391.57 L-114.62 1399.66 L-111.32 1395.72 L-121.00 1387.64 L-130.61 1379.61 L-140.17 1371.63 L-149.66 1363.70 L-159.09 1355.82 L-168.47 1347.99 L-177.79 1340.21 L-187.04 1332.48 L-196.25 1324.80 L-205.39 1317.16 L-214.48 1309.57 L-223.51 1302.03 L-232.49 1294.53 L-241.41 1287.08 L-250.28 1279.67 L-259.09 1272.31 L-267.85 1264.99 L-276.56 1257.72 L-285.21 1250.49 L-293.82 1243.31 L-302.37 1236.16 L-310.87 1229.06 L-319.32 1222.01Z"/><path d="M-281.97 -303.59 L-283.22 -303.29 L-284.48 -302.98 L-285.74 -302.68 L-286.99 -302.38 L-288.25 -302.08 L-289.51 -301.77 L-290.77 -301.47 L-292.03 -301.17 L-293.29 -300.86 L-294.55 -300.56 L-295.81 -300.26 L-297.08 -299.95 L-298.34 -299.65 L-299.61 -299.34 L-300.88 -299.04 L-302.14 -298.73 L-303.41 -298.43 L-304.68 -298.12 L-305.95 -297.82 L-307.22 -297.51 L-308.49 -297.21 L-309.77 -296.90 L-311.04 -296.59 L-310.70 -295.17 L-309.42 -295.47 L-308.15 -295.78 L-306.88 -296.09 L-305.61 -296.39 L-304.34 -296.70 L-303.07 -297.00 L-301.80 -297.31 L-300.53 -297.61 L-299.27 -297.92 L-298.00 -298.22 L-296.74 -298.53 L-295.47 -298.83 L-294.21 -299.14 L-292.95 -299.44 L-291.69 -299.74 L-290.43 -300.05 L-289.17 -300.35 L-287.91 -300.65 L-286.65 -300.96 L-285.39 -301.26 L-284.14 -301.56 L-282.88 -301.86 L-281.63 -302.16Z M-194.98 -303.73 L-199.88 -302.53 L-204.79 -301.31 L-209.72 -300.10 L-214.66 -298.88 L-219.61 -297.66 L-224.58 -296.43 L-229.56 -295.21 L-234.56 -293.97 L-239.57 -292.74 L-244.60 -291.50 L-249.64 -290.26 L-254.69 -289.01 L-259.76 -287.76 L-264.84 -286.51 L-269.94 -285.25 L-275.05 -283.99 L-280.18 -282.72 L-285.33 -281.45 L-290.48 -280.18 L-295.66 -278.91 L-300.84 -277.63 L-306.05 -276.35 L-311.27 -275.06 L-310.91 -273.62 L-305.69 -274.90 L-300.49 -276.19 L-295.30 -277.47 L-290.13 -278.74 L-284.97 -280.02 L-279.83 -281.28 L-274.70 -282.55 L-269.59 -283.81 L-264.49 -285.07 L-259.40 -286.32 L-254.34 -287.57 L-249.28 -288.82 L-244.24 -290.06 L-239.22 -291.30 L-234.20 -292.54 L-229.21 -293.77 L-224.23 -295.00 L-219.26 -296.23 L-214.30 -297.45 L-209.36 -298.67 L-204.44 -299.88 L-199.52 -301.10 L-194.63 -302.30Z M-111.04 -303.11 L-119.28 -301.02 L-127.57 -298.93 L-135.90 -296.82 L-144.27 -294.70 L-152.68 -292.58 L-161.13 -290.44 L-169.63 -288.29 L-178.16 -286.13 L-186.74 -283.96 L-195.36 -281.78 L-204.03 -279.59 L-212.74 -277.39 L-221.49 -275.17 L-230.29 -272.95 L-239.13 -270.71 L-248.01 -268.47 L-256.95 -266.21 L-265.92 -263.94 L-274.95 -261.65 L-284.01 -259.36 L-293.13 -257.06 L-302.29 -254.74 L-311.50 -252.41 L-311.13 -250.95 L-301.92 -253.28 L-292.76 -255.60 L-283.65 -257.91 L-274.58 -260.20 L-265.55 -262.48 L-256.58 -264.75 L-247.65 -267.01 L-238.76 -269.26 L-229.92 -271.50 L-221.12 -273.72 L-212.37 -275.94 L-203.66 -278.14 L-195.00 -280.34 L-186.38 -282.52 L-177.80 -284.69 L-169.26 -286.85 L-160.77 -289.00 L-152.31 -291.13 L-143.90 -293.26 L-135.53 -295.38 L-127.21 -297.49 L-118.92 -299.58 L-110.67 -301.67Z M-23.96 -303.25 L-35.51 -300.26 L-47.14 -297.24 L-58.85 -294.20 L-70.64 -291.14 L-82.52 -288.06 L-94.48 -284.95 L-106.52 -281.83 L-118.66 -278.68 L-130.88 -275.50 L-143.19 -272.31 L-155.59 -269.09 L-168.08 -265.85 L-180.66 -262.58 L-193.34 -259.29 L-206.11 -255.98 L-218.97 -252.64 L-231.93 -249.28 L-244.98 -245.89 L-258.14 -242.47 L-271.39 -239.03 L-284.74 -235.57 L-298.20 -232.08 L-311.75 -228.56 L-311.37 -227.08 L-297.81 -230.60 L-284.36 -234.09 L-271.01 -237.56 L-257.76 -241.00 L-244.60 -244.42 L-231.55 -247.81 L-218.59 -251.17 L-205.73 -254.51 L-192.96 -257.83 L-180.28 -261.12 L-167.70 -264.39 L-155.21 -267.63 L-142.81 -270.85 L-130.50 -274.05 L-118.28 -277.22 L-106.15 -280.37 L-94.10 -283.50 L-82.14 -286.61 L-70.26 -289.69 L-58.47 -292.75 L-46.76 -295.79 L-35.13 -298.81 L-23.59 -301.81Z M63.11 -303.40 L48.44 -299.49 L33.64 -295.55 L18.70 -291.56 L3.63 -287.55 L-11.59 -283.49 L-26.95 -279.39 L-42.45 -275.26 L-58.11 -271.09 L-73.91 -266.88 L-89.86 -262.62 L-105.96 -258.33 L-122.22 -254.00 L-138.64 -249.62 L-155.22 -245.20 L-171.96 -240.74 L-188.86 -236.23 L-205.93 -231.68 L-223.17 -227.09 L-240.59 -222.45 L-258.18 -217.76 L-275.94 -213.02 L-293.89 -208.24 L-312.01 -203.41 L-311.62 -201.91 L-293.49 -206.74 L-275.54 -211.53 L-257.78 -216.27 L-240.19 -220.96 L-222.78 -225.60 L-205.54 -230.20 L-188.47 -234.75 L-171.56 -239.26 L-154.82 -243.73 L-138.25 -248.15 L-121.83 -252.52 L-105.57 -256.86 L-89.47 -261.16 L-73.52 -265.41 L-57.72 -269.62 L-42.06 -273.80 L-26.56 -277.93 L-11.20 -282.03 L4.02 -286.09 L19.09 -290.11 L34.03 -294.09 L48.83 -298.04 L63.50 -301.95Z M150.18 -303.55 L132.57 -298.72 L114.77 -293.85 L96.76 -288.91 L78.54 -283.92 L60.11 -278.87 L41.47 -273.76 L22.61 -268.60 L3.52 -263.37 L-15.79 -258.08 L-35.32 -252.72 L-55.10 -247.31 L-75.11 -241.82 L-95.36 -236.27 L-115.87 -230.66 L-136.62 -224.97 L-157.63 -219.22 L-178.90 -213.39 L-200.44 -207.49 L-222.24 -201.51 L-244.33 -195.46 L-266.69 -189.33 L-289.35 -183.13 L-312.29 -176.84 L-311.88 -175.32 L-288.93 -181.61 L-266.28 -187.82 L-243.92 -193.95 L-221.83 -200.01 L-200.02 -205.98 L-178.49 -211.89 L-157.22 -217.72 L-136.21 -223.48 L-115.46 -229.17 L-94.96 -234.79 L-74.70 -240.34 L-54.69 -245.82 L-34.92 -251.24 L-15.38 -256.60 L3.93 -261.89 L23.01 -267.12 L41.87 -272.29 L60.51 -277.40 L78.94 -282.45 L97.16 -287.45 L115.17 -292.38 L132.97 -297.26 L150.58 -302.09Z M237.25 -303.69 L216.89 -297.95 L196.24 -292.14 L175.32 -286.24 L154.10 -280.26 L132.60 -274.20 L110.79 -268.06 L88.68 -261.83 L66.26 -255.51 L43.52 -249.10 L20.45 -242.60 L-2.95 -236.00 L-26.69 -229.31 L-50.78 -222.52 L-75.22 -215.64 L-100.03 -208.65 L-125.21 -201.55 L-150.77 -194.35 L-176.71 -187.04 L-203.05 -179.61 L-229.80 -172.08 L-256.97 -164.42 L-284.56 -156.64 L-312.59 -148.75 L-312.15 -147.21 L-284.13 -155.11 L-256.54 -162.89 L-229.37 -170.55 L-202.62 -178.09 L-176.28 -185.52 L-150.34 -192.83 L-124.78 -200.04 L-99.60 -207.13 L-74.80 -214.13 L-50.36 -221.02 L-26.27 -227.81 L-2.53 -234.51 L20.87 -241.10 L43.94 -247.61 L66.68 -254.02 L89.10 -260.34 L111.21 -266.57 L133.02 -272.72 L154.52 -278.79 L175.73 -284.77 L196.66 -290.67 L217.30 -296.49 L237.67 -302.23Z M321.67 -303.07 L298.79 -296.43 L275.56 -289.69 L251.96 -282.85 L227.99 -275.89 L203.63 -268.83 L178.88 -261.65 L153.73 -254.35 L128.16 -246.93 L102.17 -239.39 L75.74 -231.73 L48.87 -223.93 L21.54 -216.00 L-6.26 -207.94 L-34.54 -199.73 L-63.31 -191.39 L-92.59 -182.89 L-122.38 -174.25 L-152.71 -165.45 L-183.59 -156.49 L-215.04 -147.37 L-247.06 -138.08 L-279.67 -128.62 L-312.90 -118.98 L-312.45 -117.42 L-279.22 -127.06 L-246.61 -136.53 L-214.59 -145.82 L-183.14 -154.95 L-152.27 -163.91 L-121.94 -172.71 L-92.14 -181.36 L-62.86 -189.86 L-34.09 -198.21 L-5.82 -206.42 L21.98 -214.49 L49.31 -222.42 L76.18 -230.22 L102.60 -237.89 L128.59 -245.43 L154.16 -252.85 L179.32 -260.15 L204.07 -267.34 L228.42 -274.41 L252.40 -281.37 L275.99 -288.21 L299.22 -294.96 L322.09 -301.60Z M408.82 -303.22 L383.54 -295.66 L357.81 -287.97 L331.61 -280.14 L304.94 -272.17 L277.78 -264.05 L250.12 -255.78 L221.93 -247.36 L193.22 -238.77 L163.96 -230.03 L134.14 -221.11 L103.74 -212.03 L72.74 -202.76 L41.12 -193.31 L8.88 -183.67 L-24.02 -173.84 L-57.59 -163.81 L-91.85 -153.57 L-126.82 -143.11 L-162.53 -132.44 L-199.01 -121.54 L-236.26 -110.40 L-274.33 -99.02 L-313.23 -87.39 L-312.76 -85.80 L-273.85 -97.44 L-235.79 -108.82 L-198.53 -119.96 L-162.06 -130.87 L-126.36 -141.55 L-91.38 -152.01 L-57.12 -162.25 L-23.56 -172.29 L9.34 -182.13 L41.58 -191.77 L73.19 -201.23 L104.19 -210.50 L134.59 -219.59 L164.41 -228.51 L193.67 -237.26 L222.39 -245.85 L250.57 -254.27 L278.23 -262.55 L305.39 -270.67 L332.06 -278.65 L358.25 -286.48 L383.98 -294.17 L409.26 -301.73Z M495.97 -303.36 L468.46 -294.89 L440.41 -286.24 L411.78 -277.41 L382.57 -268.41 L352.75 -259.22 L322.31 -249.83 L291.23 -240.25 L259.48 -230.46 L227.05 -220.47 L193.91 -210.25 L160.04 -199.81 L125.41 -189.14 L90.01 -178.22 L53.79 -167.06 L16.74 -155.64 L-21.18 -143.95 L-59.99 -131.99 L-99.73 -119.74 L-140.43 -107.19 L-182.13 -94.33 L-224.86 -81.16 L-268.66 -67.66 L-313.58 -53.81 L-313.08 -52.19 L-268.17 -66.05 L-224.36 -79.56 L-181.63 -92.74 L-139.94 -105.60 L-99.24 -118.15 L-59.50 -130.41 L-20.69 -142.38 L17.22 -154.07 L54.27 -165.50 L90.49 -176.67 L125.89 -187.59 L160.52 -198.27 L194.39 -208.71 L227.52 -218.93 L259.95 -228.94 L291.70 -238.73 L322.78 -248.31 L353.22 -257.70 L383.03 -266.90 L412.24 -275.91 L440.87 -284.74 L468.92 -293.39 L496.43 -301.87Z M583.12 -303.51 L553.57 -294.11 L523.37 -284.50 L492.48 -274.67 L460.89 -264.61 L428.57 -254.33 L395.50 -243.80 L361.64 -233.03 L326.98 -222.00 L291.48 -210.70 L255.11 -199.13 L217.84 -187.27 L179.64 -175.11 L140.46 -162.65 L100.28 -149.86 L59.05 -136.74 L16.73 -123.27 L-26.72 -109.45 L-71.34 -95.25 L-117.20 -80.65 L-164.33 -65.65 L-212.80 -50.23 L-262.65 -34.37 L-313.96 -18.04 L-313.44 -16.39 L-262.13 -32.72 L-212.28 -48.60 L-163.82 -64.03 L-116.68 -79.04 L-70.83 -93.64 L-26.21 -107.85 L17.24 -121.68 L59.56 -135.15 L100.78 -148.28 L140.96 -161.07 L180.14 -173.55 L218.34 -185.71 L255.61 -197.58 L291.97 -209.16 L327.47 -220.46 L362.13 -231.49 L395.98 -242.27 L429.05 -252.80 L461.37 -263.09 L492.96 -273.15 L523.85 -282.99 L554.05 -292.60 L583.60 -302.01Z M670.27 -303.66 L638.86 -293.33 L606.69 -282.75 L573.71 -271.90 L539.91 -260.79 L505.24 -249.39 L469.68 -237.69 L433.20 -225.69 L395.74 -213.38 L357.29 -200.73 L317.79 -187.74 L277.20 -174.39 L235.48 -160.67 L192.57 -146.56 L148.43 -132.05 L103.01 -117.11 L56.24 -101.73 L8.07 -85.89 L-41.58 -69.56 L-92.76 -52.73 L-145.54 -35.37 L-200.02 -17.46 L-256.26 1.04 L-314.36 20.14 L-313.81 21.83 L-255.71 2.71 L-199.47 -15.79 L-145.00 -33.72 L-92.21 -51.09 L-41.04 -67.93 L8.60 -84.26 L56.77 -100.11 L103.54 -115.50 L148.96 -130.45 L193.09 -144.97 L236.00 -159.09 L277.72 -172.82 L318.30 -186.17 L357.80 -199.17 L396.26 -211.82 L433.71 -224.14 L470.19 -236.15 L505.75 -247.85 L540.41 -259.26 L574.21 -270.38 L607.19 -281.23 L639.36 -291.82 L670.77 -302.15Z M757.42 -303.81 L724.34 -292.55 L690.37 -280.99 L655.48 -269.12 L619.63 -256.93 L582.79 -244.39 L544.90 -231.50 L505.92 -218.24 L465.81 -204.59 L424.52 -190.54 L381.99 -176.07 L338.17 -161.17 L293.00 -145.80 L246.41 -129.94 L198.33 -113.59 L148.70 -96.70 L97.44 -79.26 L44.46 -61.23 L-10.32 -42.60 L-67.00 -23.31 L-125.68 -3.35 L-186.45 17.33 L-249.45 38.76 L-314.79 60.99 L-314.21 62.71 L-248.87 40.47 L-185.88 19.03 L-125.10 -1.66 L-66.43 -21.64 L-9.76 -40.93 L45.02 -59.58 L98.00 -77.62 L149.26 -95.07 L198.89 -111.96 L246.96 -128.33 L293.55 -144.19 L338.72 -159.57 L382.54 -174.49 L425.06 -188.96 L466.35 -203.02 L506.46 -216.67 L545.43 -229.94 L583.31 -242.84 L620.16 -255.38 L656.00 -267.59 L690.89 -279.46 L724.86 -291.03 L757.94 -302.29Z M842.38 -303.18 L807.84 -291.01 L772.30 -278.48 L735.72 -265.59 L698.04 -252.31 L659.23 -238.63 L619.22 -224.54 L577.97 -210.00 L535.41 -195.00 L491.48 -179.52 L446.11 -163.53 L399.23 -147.01 L350.77 -129.93 L300.64 -112.26 L248.76 -93.97 L195.02 -75.04 L139.34 -55.41 L81.59 -35.06 L21.68 -13.95 L-40.54 7.98 L-105.19 30.76 L-172.42 54.46 L-242.38 79.11 L-315.26 104.80 L-314.63 106.56 L-241.77 80.86 L-171.80 56.19 L-104.58 32.48 L-39.94 9.69 L22.27 -12.25 L82.19 -33.38 L139.92 -53.74 L195.61 -73.38 L249.34 -92.33 L301.22 -110.62 L351.35 -128.30 L399.81 -145.39 L446.68 -161.92 L492.04 -177.92 L535.97 -193.41 L578.53 -208.42 L619.78 -222.96 L659.78 -237.07 L698.59 -250.76 L736.26 -264.04 L772.85 -276.94 L808.38 -289.47 L842.92 -301.65Z M929.61 -303.33 L893.76 -290.22 L856.79 -276.71 L818.64 -262.77 L779.27 -248.38 L738.61 -233.51 L696.60 -218.16 L653.16 -202.28 L608.24 -185.86 L561.73 -168.86 L513.57 -151.26 L463.67 -133.02 L411.92 -114.10 L358.22 -94.47 L302.46 -74.09 L244.52 -52.91 L184.27 -30.89 L121.56 -7.97 L56.25 15.91 L-11.84 40.79 L-82.87 66.76 L-157.06 93.88 L-234.61 122.22 L-315.75 151.88 L-315.09 153.69 L-233.95 124.01 L-156.41 95.65 L-82.23 68.52 L-11.20 42.53 L56.88 17.63 L122.18 -6.25 L184.89 -29.19 L245.13 -51.23 L303.07 -72.42 L358.83 -92.81 L412.52 -112.45 L464.27 -131.38 L514.17 -149.63 L562.32 -167.24 L608.82 -184.25 L653.75 -200.68 L697.18 -216.57 L739.19 -231.93 L779.85 -246.81 L819.21 -261.21 L857.36 -275.16 L894.33 -288.68 L930.18 -301.79Z M1016.84 -303.48 L979.86 -289.44 L941.64 -274.93 L902.13 -259.93 L861.24 -244.40 L818.91 -228.33 L775.07 -211.69 L729.62 -194.43 L682.48 -176.54 L633.56 -157.97 L582.75 -138.68 L529.94 -118.63 L475.00 -97.77 L417.81 -76.06 L358.23 -53.44 L296.10 -29.85 L231.26 -5.23 L163.52 20.48 L92.68 47.37 L18.54 75.52 L-59.16 105.02 L-140.67 135.96 L-226.27 168.46 L-316.29 202.64 L-315.59 204.49 L-225.57 170.30 L-139.98 137.78 L-58.48 106.82 L19.21 77.30 L93.35 49.14 L164.18 22.23 L231.91 -3.51 L296.75 -28.14 L358.88 -51.74 L418.45 -74.37 L475.63 -96.10 L530.57 -116.97 L583.37 -137.03 L634.18 -156.33 L683.10 -174.91 L730.23 -192.82 L775.67 -210.08 L819.52 -226.74 L861.84 -242.82 L902.72 -258.35 L942.24 -273.36 L980.45 -287.88 L1017.43 -301.93Z M1104.07 -303.63 L1066.15 -288.65 L1026.87 -273.14 L986.17 -257.06 L943.95 -240.39 L900.14 -223.09 L854.65 -205.13 L807.37 -186.46 L758.20 -167.04 L707.01 -146.83 L653.70 -125.77 L598.11 -103.82 L540.11 -80.92 L479.53 -56.99 L416.19 -31.98 L349.90 -5.80 L280.46 21.62 L207.62 50.39 L131.14 80.59 L50.74 112.34 L-33.91 145.77 L-123.13 181.00 L-217.31 218.19 L-316.87 257.51 L-316.12 259.42 L-216.56 220.08 L-122.39 182.86 L-33.18 147.61 L51.45 114.16 L131.85 82.39 L208.32 52.17 L281.15 23.38 L350.59 -4.06 L416.87 -30.25 L480.20 -55.28 L540.78 -79.22 L598.78 -102.14 L654.36 -124.10 L707.67 -145.17 L758.84 -165.39 L808.01 -184.82 L855.29 -203.51 L900.78 -221.49 L944.58 -238.80 L986.79 -255.48 L1027.50 -271.56 L1066.77 -287.08 L1104.69 -302.07Z M1191.30 -303.77 L1152.63 -287.86 L1112.48 -271.34 L1070.78 -254.18 L1027.43 -236.35 L982.33 -217.79 L935.37 -198.47 L886.44 -178.34 L835.42 -157.35 L782.15 -135.43 L726.50 -112.53 L668.29 -88.58 L607.35 -63.51 L543.48 -37.23 L476.47 -9.66 L406.07 19.31 L332.03 49.77 L254.04 81.86 L171.80 115.70 L84.93 151.44 L-6.96 189.25 L-104.31 229.30 L-207.64 271.82 L-317.51 317.02 L-316.70 318.99 L-206.84 273.76 L-103.52 231.22 L-6.18 191.13 L85.70 153.30 L172.55 117.54 L254.79 83.68 L332.76 51.57 L406.80 21.08 L477.19 -7.90 L544.20 -35.49 L608.06 -61.79 L668.99 -86.88 L727.19 -110.84 L782.84 -133.75 L836.10 -155.68 L887.12 -176.69 L936.05 -196.84 L983.00 -216.17 L1028.09 -234.74 L1071.44 -252.58 L1113.13 -269.75 L1153.28 -286.28 L1191.95 -302.21Z M1276.73 -303.15 L1237.50 -286.30 L1196.68 -268.77 L1154.19 -250.53 L1109.92 -231.51 L1063.75 -211.69 L1015.56 -190.99 L965.21 -169.37 L912.55 -146.75 L857.42 -123.08 L799.65 -98.27 L739.04 -72.24 L675.37 -44.90 L608.40 -16.14 L537.89 14.14 L463.52 46.08 L384.98 79.81 L301.92 115.48 L213.92 153.27 L120.53 193.38 L21.24 236.02 L-84.53 281.44 L-197.42 329.92 L-318.20 381.78 L-317.32 383.82 L-196.56 331.92 L-83.68 283.40 L22.07 237.95 L121.35 195.29 L214.72 155.15 L302.72 117.34 L385.77 81.64 L464.30 47.89 L538.65 15.93 L609.17 -14.37 L676.12 -43.15 L739.78 -70.51 L800.39 -96.55 L858.15 -121.38 L913.27 -145.07 L965.92 -167.70 L1016.27 -189.34 L1064.45 -210.05 L1110.62 -229.89 L1154.89 -248.91 L1197.37 -267.17 L1238.18 -284.71 L1277.41 -301.57Z M1364.04 -303.30 L1324.42 -285.51 L1283.12 -266.96 L1240.02 -247.60 L1195.00 -227.39 L1147.94 -206.25 L1098.69 -184.13 L1047.09 -160.96 L992.97 -136.65 L936.14 -111.13 L876.39 -84.30 L813.50 -56.05 L747.21 -26.28 L677.23 5.14 L603.25 38.37 L524.91 73.55 L441.82 110.86 L353.54 150.51 L259.55 192.72 L159.29 237.75 L52.11 285.88 L-62.73 337.46 L-186.09 392.86 L-318.95 452.53 L-318.00 454.63 L-185.16 394.93 L-61.82 339.49 L53.01 287.88 L160.17 239.71 L260.42 194.65 L354.39 152.41 L442.67 112.74 L525.74 75.40 L604.07 40.19 L678.04 6.95 L748.01 -24.50 L814.29 -54.30 L877.18 -82.56 L936.91 -109.41 L993.73 -134.95 L1047.84 -159.27 L1099.44 -182.46 L1148.68 -204.59 L1195.74 -225.74 L1240.75 -245.98 L1283.84 -265.34 L1325.14 -283.91 L1364.75 -301.71Z M1451.34 -303.45 L1411.53 -284.71 L1369.94 -265.13 L1326.43 -244.66 L1280.88 -223.22 L1233.13 -200.75 L1183.03 -177.17 L1130.40 -152.40 L1075.04 -126.34 L1016.72 -98.90 L955.22 -69.95 L890.25 -39.37 L821.52 -7.03 L748.70 27.25 L671.40 63.63 L589.20 102.31 L501.61 143.53 L408.10 187.55 L308.04 234.64 L200.71 285.15 L85.29 339.47 L-39.16 398.04 L-173.75 461.39 L-319.78 530.11 L-318.75 532.30 L-172.75 463.53 L-38.17 400.14 L86.26 341.53 L201.66 287.17 L308.97 236.62 L409.02 189.49 L502.51 145.45 L590.08 104.20 L672.27 65.49 L749.56 29.08 L822.37 -5.22 L891.09 -37.59 L956.05 -68.18 L1017.54 -97.15 L1075.85 -124.62 L1131.20 -150.69 L1183.83 -175.48 L1233.92 -199.08 L1281.66 -221.56 L1327.20 -243.02 L1370.70 -263.51 L1412.29 -283.10 L1452.10 -301.85Z M1538.65 -303.59 L1498.76 -283.88 L1456.99 -263.23 L1413.20 -241.58 L1367.23 -218.85 L1318.92 -194.97 L1268.08 -169.84 L1214.52 -143.36 L1158.00 -115.42 L1098.28 -85.89 L1035.07 -54.64 L968.06 -21.52 L896.90 13.66 L821.19 51.09 L740.48 90.99 L654.25 133.62 L561.92 179.26 L462.82 228.26 L356.17 280.98 L241.09 337.87 L116.52 399.45 L-18.75 466.33 L-166.18 539.21 L-327.46 618.94 L-326.33 621.22 L-165.08 541.43 L-17.68 468.50 L117.57 401.57 L242.12 339.95 L357.18 283.01 L463.81 230.25 L562.89 181.22 L655.20 135.55 L741.41 92.89 L822.11 52.96 L897.81 15.50 L968.96 -19.70 L1035.95 -52.85 L1099.15 -84.12 L1158.86 -113.67 L1215.37 -141.63 L1268.92 -168.13 L1319.75 -193.28 L1368.05 -217.18 L1414.02 -239.92 L1457.80 -261.59 L1499.57 -282.25 L1539.44 -301.99Z M1625.95 -303.74 L1586.26 -283.08 L1544.59 -261.39 L1500.81 -238.59 L1454.73 -214.60 L1406.19 -189.33 L1354.97 -162.66 L1300.84 -134.49 L1243.56 -104.66 L1182.83 -73.05 L1118.34 -39.47 L1049.73 -3.75 L976.58 34.33 L898.44 75.01 L814.77 118.57 L724.97 165.32 L628.33 215.63 L524.05 269.92 L411.17 328.69 L288.60 392.50 L155.03 462.04 L8.90 538.12 L-151.65 621.70 L-328.84 713.95 L-327.60 716.33 L-150.44 624.01 L10.07 540.37 L156.17 464.23 L289.72 394.64 L412.27 330.78 L525.12 271.97 L629.38 217.64 L726.00 167.29 L815.78 120.50 L899.43 76.91 L977.56 36.20 L1050.69 -1.91 L1119.29 -37.66 L1183.76 -71.26 L1244.48 -102.89 L1301.75 -132.74 L1355.86 -160.94 L1407.08 -187.63 L1455.61 -212.92 L1501.68 -236.92 L1545.45 -259.74 L1587.11 -281.44 L1626.79 -302.12Z M1713.25 -303.89 L1673.94 -282.28 L1632.58 -259.54 L1589.02 -235.58 L1543.06 -210.32 L1494.52 -183.62 L1443.15 -155.38 L1388.72 -125.45 L1330.93 -93.68 L1269.46 -59.89 L1203.96 -23.87 L1134.02 14.59 L1059.15 55.75 L978.84 99.91 L892.45 147.40 L799.28 198.63 L698.48 254.05 L589.10 314.19 L469.97 379.69 L339.74 451.29 L196.77 529.90 L39.12 616.58 L-135.63 712.66 L-330.39 819.74 L-329.01 822.24 L-134.30 715.07 L40.40 618.92 L198.02 532.17 L340.95 453.51 L471.16 381.85 L590.26 316.30 L699.62 256.11 L800.39 200.65 L893.54 149.38 L979.90 101.84 L1060.20 57.65 L1135.05 16.46 L1204.98 -22.03 L1270.46 -58.07 L1331.91 -91.89 L1389.69 -123.69 L1444.11 -153.64 L1495.46 -181.91 L1544.00 -208.62 L1589.94 -233.90 L1633.50 -257.88 L1674.84 -280.63 L1714.15 -302.26Z M1799.22 -303.26 L1760.47 -280.69 L1719.62 -256.89 L1676.48 -231.76 L1630.87 -205.19 L1582.55 -177.05 L1531.29 -147.19 L1476.81 -115.46 L1418.79 -81.66 L1356.88 -45.60 L1290.68 -7.03 L1219.71 34.31 L1143.45 78.73 L1061.27 126.60 L972.48 178.32 L876.22 234.39 L771.53 295.38 L657.24 361.95 L531.96 434.93 L394.04 515.27 L241.45 604.15 L71.73 703.02 L-118.19 813.64 L-332.12 938.26 L-330.59 940.89 L-116.71 816.17 L73.15 705.45 L242.82 606.51 L395.37 517.56 L533.26 437.15 L658.50 364.12 L772.76 297.49 L877.43 236.45 L973.65 180.34 L1062.43 128.58 L1144.58 80.67 L1220.82 36.21 L1291.77 -5.16 L1357.96 -43.76 L1419.85 -79.85 L1477.85 -113.67 L1532.32 -145.43 L1583.56 -175.32 L1631.86 -203.48 L1677.47 -230.07 L1720.59 -255.22 L1761.44 -279.04 L1800.18 -301.63Z M1886.60 -303.41 L1848.61 -279.88 L1808.47 -255.02 L1765.99 -228.71 L1720.95 -200.81 L1673.12 -171.19 L1622.23 -139.67 L1567.98 -106.08 L1510.03 -70.18 L1447.97 -31.74 L1381.36 9.51 L1309.68 53.90 L1232.33 101.81 L1148.60 153.67 L1057.67 209.98 L958.59 271.35 L850.18 338.49 L731.08 412.26 L599.61 493.68 L453.76 584.01 L291.01 684.81 L108.26 797.99 L-98.43 926.00 L-334.08 1071.95 L-332.36 1074.72 L-96.78 928.65 L109.84 800.54 L292.53 687.26 L455.23 586.38 L601.04 495.97 L732.46 414.48 L851.52 340.66 L959.89 273.46 L1058.95 212.04 L1149.85 155.68 L1233.55 103.78 L1310.88 55.84 L1382.53 11.40 L1449.12 -29.88 L1511.16 -68.35 L1569.10 -104.27 L1623.33 -137.90 L1674.20 -169.45 L1722.02 -199.09 L1767.04 -227.01 L1809.51 -253.34 L1849.64 -278.22 L1887.61 -301.77Z M1973.97 -303.55 L1936.94 -279.07 L1897.72 -253.14 L1856.12 -225.63 L1811.90 -196.39 L1764.81 -165.26 L1714.57 -132.04 L1660.84 -96.52 L1603.25 -58.45 L1541.38 -17.54 L1474.72 26.54 L1402.69 74.16 L1324.62 125.78 L1239.71 181.91 L1147.04 243.19 L1045.47 310.34 L933.67 384.26 L810.00 466.03 L672.47 556.95 L518.62 658.68 L345.35 773.24 L148.74 903.23 L-76.27 1052.00 L-336.31 1223.93 L-334.37 1226.86 L-74.43 1054.79 L150.50 905.89 L347.04 775.79 L520.25 661.13 L674.04 559.32 L811.52 468.32 L935.14 386.48 L1046.90 312.50 L1148.43 245.29 L1241.07 183.96 L1325.94 127.78 L1403.98 76.12 L1475.99 28.46 L1542.62 -15.65 L1604.48 -56.60 L1662.04 -94.70 L1715.75 -130.26 L1765.97 -163.50 L1813.04 -194.66 L1857.24 -223.92 L1898.84 -251.46 L1938.04 -277.41 L1975.06 -301.91Z M2061.34 -303.70 L2025.46 -278.25 L1987.37 -251.25 L1946.87 -222.53 L1903.71 -191.93 L1857.63 -159.25 L1808.32 -124.29 L1755.43 -86.78 L1698.55 -46.45 L1637.21 -2.96 L1570.87 44.08 L1498.89 95.12 L1420.52 150.69 L1334.88 211.42 L1240.88 278.06 L1137.26 351.54 L1022.46 432.94 L894.55 523.64 L751.17 625.30 L589.32 740.07 L405.19 870.63 L193.83 1020.49 L-51.26 1194.28 L-338.88 1398.22 L-336.67 1401.34 L-49.18 1197.22 L195.81 1023.28 L407.07 873.29 L591.12 742.61 L752.90 627.75 L896.22 525.99 L1024.07 435.22 L1138.83 353.75 L1242.40 280.21 L1336.36 213.50 L1421.97 152.72 L1500.30 97.10 L1572.25 46.02 L1638.56 -1.06 L1699.87 -44.59 L1756.73 -84.96 L1809.60 -122.49 L1858.88 -157.49 L1904.95 -190.19 L1948.08 -220.82 L1988.57 -249.56 L2026.64 -276.59 L2062.51 -302.06Z M2148.71 -303.84 L2115.39 -278.36 L2080.01 -251.32 L2042.39 -222.56 L2002.30 -191.91 L1959.50 -159.19 L1913.68 -124.16 L1864.53 -86.59 L1811.67 -46.18 L1754.66 -2.60 L1692.99 44.55 L1626.07 95.71 L1553.19 151.42 L1473.53 212.31 L1386.09 279.16 L1289.68 352.87 L1182.83 434.55 L1063.75 525.58 L930.23 627.65 L779.45 742.92 L607.85 874.10 L410.79 1024.74 L182.16 1199.53 L-86.31 1404.76 L-83.90 1407.91 L184.43 1202.49 L412.95 1027.55 L609.90 876.78 L781.41 745.48 L932.11 630.11 L1065.56 527.95 L1184.58 436.84 L1291.37 355.08 L1387.74 281.31 L1475.13 214.40 L1554.75 153.45 L1627.59 97.69 L1694.47 46.49 L1756.11 -0.70 L1813.09 -44.32 L1865.93 -84.77 L1915.05 -122.37 L1960.84 -157.43 L2003.63 -190.18 L2043.70 -220.86 L2081.30 -249.64 L2116.65 -276.71 L2149.96 -302.20Z M2222.84 -293.00 L2191.94 -267.37 L2159.15 -240.18 L2124.29 -211.27 L2087.16 -180.48 L2047.53 -147.61 L2005.13 -112.46 L1959.68 -74.77 L1910.82 -34.25 L1858.17 9.42 L1801.24 56.62 L1739.52 107.81 L1672.36 163.51 L1599.01 224.34 L1518.57 291.04 L1429.97 364.52 L1331.89 445.85 L1222.74 536.37 L1100.51 637.73 L962.72 752.00 L806.19 881.81 L626.81 1030.56 L419.19 1202.74 L176.09 1404.34 L178.71 1407.50 L421.66 1205.72 L629.15 1033.39 L808.42 884.50 L964.86 754.57 L1102.56 640.20 L1224.71 538.75 L1333.80 448.15 L1431.81 366.74 L1520.36 293.20 L1600.75 226.43 L1674.05 165.55 L1741.17 109.80 L1802.86 58.57 L1859.74 11.32 L1912.37 -32.39 L1961.20 -72.94 L2006.62 -110.67 L2048.99 -145.85 L2088.59 -178.75 L2125.70 -209.57 L2160.54 -238.50 L2193.31 -265.72 L2224.19 -291.37Z M2223.29 -213.36 L2193.89 -186.72 L2162.79 -158.54 L2129.82 -128.67 L2094.82 -96.95 L2057.60 -63.22 L2017.92 -27.27 L1975.55 11.12 L1930.19 52.22 L1881.53 96.32 L1829.18 143.75 L1772.71 194.92 L1711.62 250.28 L1645.31 310.37 L1573.08 375.81 L1494.11 447.37 L1407.40 525.95 L1311.76 612.61 L1205.73 708.69 L1087.52 815.80 L954.91 935.96 L805.10 1071.71 L634.50 1226.30 L438.47 1403.93 L441.34 1407.09 L637.22 1229.30 L807.69 1074.57 L957.39 938.69 L1089.90 818.42 L1208.02 711.21 L1313.97 615.05 L1409.54 528.30 L1496.18 449.66 L1575.10 378.03 L1647.27 312.53 L1713.53 252.38 L1774.58 196.97 L1831.00 145.76 L1883.31 98.28 L1931.94 54.15 L1977.26 13.01 L2019.60 -25.42 L2059.24 -61.40 L2096.44 -95.17 L2131.42 -126.91 L2164.36 -156.81 L2195.44 -185.02 L2224.81 -211.68Z M2222.67 -116.35 L2195.07 -88.79 L2165.97 -59.72 L2135.24 -29.03 L2102.74 3.42 L2068.32 37.80 L2031.79 74.28 L1992.96 113.06 L1951.61 154.36 L1907.47 198.44 L1860.27 245.59 L1809.66 296.13 L1755.26 350.46 L1696.64 409.00 L1633.29 472.28 L1564.59 540.89 L1489.85 615.53 L1408.24 697.03 L1318.76 786.40 L1220.22 884.82 L1111.16 993.74 L989.81 1114.94 L853.96 1250.62 L700.85 1403.53 L703.99 1406.67 L856.95 1253.61 L992.68 1117.81 L1113.92 996.50 L1222.88 887.48 L1321.33 788.97 L1410.73 699.52 L1492.27 617.94 L1566.93 543.23 L1635.56 474.56 L1698.86 411.22 L1757.43 352.62 L1811.77 298.25 L1862.34 247.66 L1909.50 200.47 L1953.59 156.35 L1994.91 115.01 L2033.70 76.19 L2070.19 39.68 L2104.59 5.27 L2137.05 -27.22 L2167.76 -57.94 L2196.83 -87.03 L2224.40 -114.61Z M2223.19 1.51 L2197.80 29.76 L2171.14 59.41 L2143.11 90.59 L2113.61 123.41 L2082.52 158.00 L2049.69 194.51 L2015.00 233.11 L1978.26 273.98 L1939.29 317.33 L1897.89 363.38 L1853.82 412.41 L1806.81 464.70 L1756.56 520.60 L1702.73 580.49 L1644.90 644.82 L1582.63 714.09 L1515.37 788.91 L1442.52 869.96 L1363.32 958.05 L1276.94 1054.16 L1182.32 1159.41 L1078.25 1275.19 L963.22 1403.15 L966.65 1406.23 L1081.55 1278.15 L1185.50 1162.27 L1280.01 1056.92 L1366.30 960.73 L1445.40 872.55 L1518.18 791.43 L1585.36 716.54 L1647.56 647.20 L1705.32 582.82 L1759.09 522.87 L1809.29 466.92 L1856.24 414.58 L1900.26 365.51 L1941.62 319.41 L1980.54 276.03 L2017.23 235.12 L2051.89 196.48 L2084.68 159.94 L2115.74 125.32 L2145.20 92.47 L2173.20 61.26 L2199.83 31.58 L2225.19 3.31Z M2223.84 149.55 L2201.21 177.96 L2177.57 207.64 L2152.86 238.66 L2126.99 271.13 L2099.90 305.15 L2071.48 340.83 L2041.64 378.29 L2010.26 417.68 L1977.24 459.14 L1942.43 502.84 L1905.68 548.97 L1866.83 597.74 L1825.70 649.38 L1782.07 704.16 L1735.71 762.36 L1686.35 824.32 L1633.71 890.41 L1577.43 961.07 L1517.12 1036.78 L1452.34 1118.10 L1382.58 1205.69 L1307.22 1300.29 L1225.58 1402.78 L1229.34 1405.77 L1310.86 1303.18 L1386.11 1208.50 L1455.77 1120.83 L1520.46 1039.44 L1580.68 963.66 L1636.88 892.94 L1689.45 826.78 L1738.74 764.77 L1785.03 706.52 L1828.60 651.69 L1869.68 600.00 L1908.47 551.19 L1945.16 505.01 L1979.93 461.27 L2012.90 419.78 L2044.23 380.36 L2074.03 342.86 L2102.41 307.15 L2129.47 273.10 L2155.29 240.60 L2179.97 209.55 L2203.58 179.85 L2226.18 151.41Z M2224.69 341.05 L2205.59 368.55 L2185.79 397.09 L2165.23 426.71 L2143.87 457.48 L2121.66 489.47 L2098.56 522.75 L2074.50 557.41 L2049.43 593.53 L2023.28 631.21 L1995.98 670.54 L1967.45 711.64 L1937.60 754.64 L1906.35 799.66 L1873.60 846.85 L1839.22 896.37 L1803.10 948.41 L1765.10 1003.15 L1725.08 1060.81 L1682.85 1121.64 L1638.25 1185.90 L1591.06 1253.89 L1541.04 1325.95 L1487.94 1402.44 L1492.04 1405.28 L1545.04 1328.72 L1594.96 1256.60 L1642.07 1188.55 L1686.60 1124.24 L1728.75 1063.36 L1768.70 1005.64 L1806.63 950.85 L1842.68 898.77 L1877.00 849.20 L1909.70 801.97 L1940.89 756.91 L1970.68 713.88 L1999.16 672.75 L2026.41 633.38 L2052.52 595.67 L2077.54 559.52 L2101.56 524.83 L2124.62 491.52 L2146.79 459.50 L2168.11 428.70 L2188.63 399.05 L2208.40 370.50 L2227.46 342.97Z M2225.82 598.45 L2211.45 622.75 L2196.67 647.73 L2181.46 673.42 L2165.82 699.86 L2149.72 727.07 L2133.14 755.09 L2116.07 783.95 L2098.46 813.70 L2080.31 844.38 L2061.59 876.03 L2042.26 908.69 L2022.30 942.43 L2001.68 977.28 L1980.36 1013.31 L1958.31 1050.58 L1935.49 1089.15 L1911.86 1129.09 L1887.37 1170.48 L1861.98 1213.39 L1835.63 1257.92 L1808.28 1304.15 L1779.85 1352.19 L1750.30 1402.14 L1754.75 1404.77 L1784.23 1354.77 L1812.59 1306.70 L1839.88 1260.43 L1866.17 1215.87 L1891.50 1172.92 L1915.93 1131.49 L1939.51 1091.52 L1962.28 1052.92 L1984.28 1015.62 L2005.55 979.56 L2026.12 944.68 L2046.03 910.92 L2065.31 878.23 L2084.00 846.56 L2102.11 815.86 L2119.67 786.08 L2136.71 757.19 L2153.25 729.15 L2169.31 701.92 L2184.91 675.46 L2200.08 649.75 L2214.83 624.74 L2229.17 600.43Z M2225.10 967.61 L2217.37 983.40 L2209.53 999.43 L2201.57 1015.70 L2193.49 1032.22 L2185.29 1048.99 L2176.96 1066.02 L2168.49 1083.32 L2159.90 1100.89 L2151.17 1118.73 L2142.30 1136.86 L2133.29 1155.28 L2124.14 1174.00 L2114.83 1193.02 L2105.37 1212.36 L2095.75 1232.02 L2085.97 1252.01 L2076.03 1272.33 L2065.92 1293.00 L2055.63 1314.03 L2045.17 1335.42 L2034.52 1357.18 L2023.69 1379.33 L2012.66 1401.87 L2017.47 1404.21 L2028.46 1381.66 L2039.26 1359.49 L2049.88 1337.71 L2060.31 1316.31 L2070.56 1295.27 L2080.64 1274.58 L2090.55 1254.24 L2100.30 1234.24 L2109.89 1214.57 L2119.32 1195.22 L2128.60 1176.18 L2137.73 1157.45 L2146.71 1139.01 L2155.55 1120.87 L2164.26 1103.01 L2172.82 1085.43 L2181.26 1068.12 L2189.56 1051.08 L2197.74 1034.30 L2205.80 1017.77 L2213.73 1001.48 L2221.55 985.44 L2229.25 969.64Z"/></g><polygon points="659,567 770,567 770,617" fill="#021214"/><polygon points="912,674 980,674 962,681 930,693 922,686" fill="#021214"/><g stroke="#b8c8c8" stroke-width="1" fill="none"><line x1="1780" y1="952" x2="1861" y2="1011"/><line x1="1848" y1="942" x2="1791" y2="1021"/></g><g font-family="Liberation Sans" font-size="11" fill="#b8c8c8"><text x="1779" y="961">W</text><text x="1848" y="950">N</text><text x="1859" y="1021">E</text><text x="1789" y="1032">S</text></g></svg>
<div id="menubar"></div>
<div class="t" style="left:6px;top:3.3px;height:14px;line-height:14px;font-size:10.6px;color:#343c46;"><u>G</u>ame</div>
<div class="t" style="left:60px;top:3.3px;height:14px;line-height:14px;font-size:10.6px;color:#343c46;"><u>T</u>ools</div>
<div class="t" style="left:109px;top:3.3px;height:14px;line-height:14px;font-size:10.6px;color:#343c46;"><u>M</u>ap</div>
<div class="t" style="left:153px;top:3.3px;height:14px;line-height:14px;font-size:10.6px;color:#343c46;"><u>E</u>dit</div>
<div class="t" style="left:194px;top:3.3px;height:14px;line-height:14px;font-size:10.6px;color:#343c46;"><u>S</u>cripts</div>
<div class="t" style="left:253px;top:3.3px;height:14px;line-height:14px;font-size:10.6px;color:#343c46;">M<u>o</u>difications</div>
<div class="t" style="left:348px;top:3.3px;height:14px;line-height:14px;font-size:10.6px;color:#343c46;"><u>?</u></div>
<div class="dlg" style="left:441px;top:97px;width:450px;height:470px;"></div>
<div class="title dark" style="left:441px;top:97px;width:450px;height:15px;"></div>
<div class="t" style="left:441px;top:97.8px;height:14px;line-height:14px;font-size:11.2px;color:#4a5464;width:450px;text-align:center;">Prototype</div>
<div class="tbtn" style="left:862px;top:99px;width:11px;height:11px;">?</div>
<div class="tbtn" style="left:877px;top:99px;width:11px;height:11px;"></div>
<div class="t" style="left:453px;top:124.8px;height:14px;line-height:14px;">Name:</div>
<div class="inp" style="left:504px;top:124px;width:217px;height:15px;"></div>
<div class="t" style="left:506px;top:125.3px;height:14px;line-height:14px;">01_44_01</div>
<div class="t" style="left:455px;top:148.8px;height:14px;line-height:14px;">File:</div>
<div class="t" style="left:503px;top:143.8px;height:14px;line-height:14px;">mod:Prototypes/Vehicles/__</div>
<div class="t" style="left:503px;top:156.8px;height:14px;line-height:14px;">Feuerwehr/01_44_01.e4p</div>
<div class="t" style="left:447px;top:166.5px;height:14px;line-height:14px;font-size:10.8px;font-weight:bold;color:#101418;">Placement</div>
<div class="rd" style="left:447.1px;top:182.5px"></div>
<div class="t" style="left:465px;top:182.8px;height:14px;line-height:14px;">None</div>
<div class="rd" style="left:447.1px;top:199.5px"></div>
<div class="t" style="left:465px;top:199.8px;height:14px;line-height:14px;">Axis aligned</div>
<div class="rd" style="left:447.1px;top:216.5px"></div>
<div class="t" style="left:465px;top:216.8px;height:14px;line-height:14px;">Bounding box edges</div>
<div class="rd" style="left:447.1px;top:233.5px"></div>
<div class="t" style="left:465px;top:233.8px;height:14px;line-height:14px;">Aligned corners</div>
<div class="rd" style="left:447.1px;top:250.5px"></div>
<div class="t" style="left:465px;top:250.8px;height:14px;line-height:14px;">Sampled</div>
<div class="rd" style="left:447.1px;top:267.5px"></div>
<div class="t" style="left:465px;top:267.8px;height:14px;line-height:14px;">Use physics</div>
<div class="rd sel" style="left:447.1px;top:284.5px"></div>
<div class="t" style="left:465px;top:284.8px;height:14px;line-height:14px;">Custom</div>
<div class="cb" style="left:447px;top:306px;width:11px;height:11px"><span>&#x2715;</span></div>
<div class="t" style="left:464px;top:305.8px;height:14px;line-height:14px;">Collision</div>
<div class="cb" style="left:524px;top:306px;width:11px;height:11px"></div>
<div class="t" style="left:541px;top:305.8px;height:14px;line-height:14px;">Enable Physics</div>
<div class="t" style="left:447px;top:325.8px;height:14px;line-height:14px;">Animations</div>
<div class="lst" style="left:447px;top:342px;width:98px;height:99px;"></div>
<div class="selbar" style="left:450px;top:343px;width:92px;height:13px;"></div>
<div class="t" style="left:450px;top:342.5px;height:14px;line-height:14px;font-weight:bold;color:#ffffff;">none</div>
<div class="t" style="left:554px;top:340.0px;height:14px;line-height:14px;font-size:10.8px;font-weight:bold;color:#101418;">Mode</div>
<div class="rd sel dis" style="left:554.5px;top:356.5px"></div>
<div class="t" style="left:571px;top:356.8px;height:14px;line-height:14px;color:#97a3b3;">Single</div>
<div class="rd dis" style="left:554.5px;top:373.5px"></div>
<div class="t" style="left:571px;top:373.8px;height:14px;line-height:14px;color:#97a3b3;">Looped</div>
<div class="rd dis" style="left:554.5px;top:390.5px"></div>
<div class="t" style="left:571px;top:390.8px;height:14px;line-height:14px;color:#97a3b3;">Looped ping-pong</div>
<div class="t" style="left:661px;top:408.8px;height:14px;line-height:14px;">Speed</div>
<div class="cb" style="left:552px;top:424px;width:11px;height:11px"><span>&#x2715;</span></div>
<div class="t" style="left:569px;top:423.8px;height:14px;line-height:14px;">default anim</div>
<div class="btn sm" style="left:643px;top:425px;width:16px;height:16px;line-height:15px;">&lt;</div>
<div class="btn sm" style="left:698px;top:425px;width:16px;height:16px;line-height:15px;">&gt;</div>
<div class="cb" style="left:630px;top:176px;width:11px;height:11px"><span>&#x2715;</span></div>
<div class="t" style="left:648px;top:175.8px;height:14px;line-height:14px;">Casts Shadows</div>
<div class="t" style="left:632px;top:191.7px;height:14px;line-height:14px;font-size:10.8px;font-weight:bold;color:#101418;">Cull mode</div>
<div class="rd" style="left:632.0px;top:207.5px"></div>
<div class="t" style="left:649px;top:207.8px;height:14px;line-height:14px;">none</div>
<div class="rd sel" style="left:632.0px;top:224.5px"></div>
<div class="t" style="left:649px;top:224.8px;height:14px;line-height:14px;">back</div>
<div class="rd" style="left:632.0px;top:241.5px"></div>
<div class="t" style="left:649px;top:241.8px;height:14px;line-height:14px;">front</div>
<div class="cb" style="left:630px;top:260px;width:11px;height:11px"><span>&#x2715;</span></div>
<div class="t" style="left:648px;top:259.8px;height:14px;line-height:14px;">Receives Shadows</div>
<div class="cb dis" style="left:630px;top:276px;width:11px;height:11px"><span>&#x2715;</span></div>
<div class="t" style="left:648px;top:275.8px;height:14px;line-height:14px;color:#98a4b4;">Lit</div>
<div class="cb" style="left:630px;top:291.8px;width:11px;height:11px"></div>
<div class="t" style="left:648px;top:291.6px;height:14px;line-height:14px;">Ambient only</div>
<div class="cb" style="left:630px;top:306.90000000000003px;width:11px;height:11px"></div>
<div class="t" style="left:648px;top:306.7px;height:14px;line-height:14px;">Pure Ambient</div>
<div class="cb" style="left:630px;top:322.0px;width:11px;height:11px"></div>
<div class="t" style="left:648px;top:321.8px;height:14px;line-height:14px;">Fake Shadows</div>
<div class="cb" style="left:630px;top:337.1px;width:11px;height:11px"></div>
<div class="t" style="left:648px;top:336.9px;height:14px;line-height:14px;">Reflection</div>
<div class="cb" style="left:630px;top:352.2px;width:11px;height:11px"></div>
<div class="t" style="left:648px;top:352.0px;height:14px;line-height:14px;">AlphaReflections</div>
<div class="btn" style="left:762px;top:119px;width:121px;height:26px;line-height:25px;">Edit Physics</div>
<div class="btn" style="left:762px;top:147px;width:121px;height:26px;line-height:25px;">Edit Children</div>
<div class="btn" style="left:762px;top:175px;width:121px;height:26px;line-height:25px;">Edit Fire Objects</div>
<div class="btn" style="left:762px;top:203px;width:121px;height:26px;line-height:25px;">Edit Lights</div>
<div class="btn" style="left:762px;top:231px;width:121px;height:26px;line-height:25px;">Edit Commands</div>
<div class="btn" style="left:762px;top:259px;width:121px;height:26px;line-height:25px;">Edit Traits</div>
<div class="t" style="left:768px;top:365.3px;height:14px;line-height:14px;">Terrain Class:</div>
<div class="drop" style="left:767px;top:380px;width:117px;height:21px;"></div>
<div class="t" style="left:771px;top:384.3px;height:14px;line-height:14px;">Squad</div>
<div class="arr" style="left:871px;top:388px"></div>
<div class="btn" style="left:761px;top:410px;width:10px;height:31px;line-height:30px;"></div>
<div class="t" style="left:447px;top:473.3px;height:14px;line-height:14px;">Modelfile:</div>
<div class="inp" style="left:504px;top:472px;width:180px;height:16px;"></div>
<div class="t" style="left:505px;top:473.8px;height:14px;line-height:14px;width:178px;overflow:hidden;">mod:Models/Vehicles/Feuerwehr Fuc</div>
<div class="btn sq" style="left:689px;top:471px;width:38px;height:18px;line-height:17px;">Browse</div>
<div class="btn sq" style="left:727px;top:471px;width:23px;height:18px;line-height:17px;">Edit</div>
<div class="t" style="left:447px;top:491.8px;height:14px;line-height:14px;color:#a0aab8;">Halfburned:</div>
<div class="inp" style="left:504px;top:490px;width:180px;height:16px;"></div>
<div class="btn sq dis" style="left:689px;top:489px;width:38px;height:18px;line-height:17px;">Browse</div>
<div class="btn sq dis" style="left:727px;top:489px;width:23px;height:18px;line-height:17px;">Edit</div>
<div class="t" style="left:447px;top:510.3px;height:14px;line-height:14px;color:#a0aab8;">Fullburned:</div>
<div class="inp" style="left:504px;top:509px;width:180px;height:16px;"></div>
<div class="btn sq dis" style="left:689px;top:508px;width:38px;height:18px;line-height:17px;">Browse</div>
<div class="btn sq dis" style="left:727px;top:508px;width:23px;height:18px;line-height:17px;">Edit</div>
<div class="t" style="left:464px;top:540.8px;height:14px;line-height:14px;">Complete:</div>
<div class="cb grey" style="left:521.5px;top:541px;width:11px;height:11px"></div>
<div class="t" style="left:538px;top:540.8px;height:14px;line-height:14px;">Physics</div>
<div class="cb grey" style="left:583.5px;top:541px;width:11px;height:11px"></div>
<div class="t" style="left:600px;top:540.8px;height:14px;line-height:14px;">Children</div>
<div class="cb grey" style="left:650.5px;top:541px;width:11px;height:11px"></div>
<div class="t" style="left:666.5px;top:540.8px;height:14px;line-height:14px;">Lights</div>
<div class="cb grey" style="left:707px;top:541px;width:11px;height:11px"></div>
<div class="t" style="left:724px;top:540.8px;height:14px;line-height:14px;">Fire</div>
<div class="cb grey" style="left:756px;top:541px;width:11px;height:11px"></div>
<div class="dlg ce" style="left:770px;top:407px;width:381px;height:267px;"></div>
<div class="title light" style="left:770px;top:407px;width:381px;height:15px;"></div>
<div class="t" style="left:770px;top:407.0px;height:14px;line-height:14px;font-size:10.8px;font-weight:bold;color:#10161e;width:381px;text-align:center;">Command Editor</div>
<div class="tbtn" style="left:1137px;top:408px;width:13px;height:13px;">?</div>
<div class="t" style="left:775.5px;top:429.8px;height:14px;line-height:14px;">Available Commands:</div>
<div class="t" style="left:989px;top:429.8px;height:14px;line-height:14px;">Assigned Commands:</div>
<div class="lst" style="left:775px;top:446px;width:152px;height:142px;"></div>
<div class="lst" style="left:990px;top:446px;width:153px;height:142px;"></div>
<div class="t" style="left:778px;top:449.0px;height:14px;line-height:14px;">ab_parken</div>
<div class="t" style="left:778px;top:462.9px;height:14px;line-height:14px;">ABC_erkunden</div>
<div class="t" style="left:778px;top:476.9px;height:14px;line-height:14px;">AbortSetPylon</div>
<div class="t" style="left:778px;top:490.8px;height:14px;line-height:14px;">AcceptsPersonal1</div>
<div class="t" style="left:778px;top:504.8px;height:14px;line-height:14px;">AcceptsPersonal2</div>
<div class="t" style="left:778px;top:518.7px;height:14px;line-height:14px;">AcceptsPersonal3</div>
<div class="t" style="left:778px;top:532.6px;height:14px;line-height:14px;">ActionEmptyPF</div>
<div class="t" style="left:778px;top:546.6px;height:14px;line-height:14px;">Activate_Cannon</div>
<div class="t" style="left:778px;top:560.5px;height:14px;line-height:14px;">Aim</div>
<div class="t" style="left:993px;top:446.5px;height:14px;line-height:14px;">DummyHasZiehFix</div>
<div class="t" style="left:993px;top:460.5px;height:14px;line-height:14px;">FOXHabeTauch</div>
<div class="t" style="left:993px;top:474.5px;height:14px;line-height:14px;">FOXHabeStandrohr</div>
<div class="t" style="left:993px;top:488.5px;height:14px;line-height:14px;">FOXHabeSchaumkanister</div>
<div class="t" style="left:993px;top:502.5px;height:14px;line-height:14px;">FOXHabeSchaumrohr</div>
<div class="t" style="left:993px;top:516.4px;height:14px;line-height:14px;">FOXHabeSaugSchlauch</div>
<div class="t" style="left:993px;top:530.4px;height:14px;line-height:14px;">DummyHasBesen</div>
<div class="t" style="left:993px;top:544.4px;height:14px;line-height:14px;">DummyHasDicht</div>
<div class="t" style="left:993px;top:558.4px;height:14px;line-height:14px;">FOXGoUH</div>
<div class="vsb" style="left:914px;top:447px;width:13px;height:128px;"></div>
<div class="thumbv" style="left:915px;top:456px;width:11px;height:12px;"></div>
<div class="arru" style="left:916.5px;top:450px"></div>
<div class="arr" style="left:916.5px;top:567px"></div>
<div class="hsb" style="left:776px;top:575px;width:137px;height:12px;"></div>
<div class="thumbh" style="left:785px;top:577px;width:93px;height:8px;"></div>
<div class="arrl" style="left:778px;top:577.0px"></div>
<div class="arrr" style="left:906px;top:577.0px"></div>
<div class="corner" style="left:914px;top:575px;width:13px;height:13px;"></div>
<div class="vsb" style="left:1130px;top:447px;width:13px;height:128px;"></div>
<div class="thumbv" style="left:1131px;top:519px;width:11px;height:46px;"></div>
<div class="arru" style="left:1132.5px;top:450px"></div>
<div class="arr" style="left:1132.5px;top:567px"></div>
<div class="hsb" style="left:991px;top:575px;width:138px;height:12px;"></div>
<div class="thumbh" style="left:1001px;top:577px;width:110px;height:8px;"></div>
<div class="arrl" style="left:993px;top:577.0px"></div>
<div class="arrr" style="left:1122px;top:577.0px"></div>
<div class="corner" style="left:1130px;top:575px;width:13px;height:13px;"></div>
<div class="btn" style="left:935px;top:494px;width:49px;height:17px;line-height:16px;">-&gt;</div>
<div class="btn" style="left:935px;top:522px;width:49px;height:17px;line-height:16px;">&lt;-</div>
<div class="btn" style="left:990px;top:592px;width:70px;height:16px;line-height:15px;">Up</div>
<div class="btn" style="left:1074px;top:592px;width:70px;height:16px;line-height:15px;">Down</div>
<div class="t" style="left:776px;top:593.8px;height:14px;line-height:14px;">New Command:</div>
<div class="inp" style="left:776px;top:610px;width:124px;height:17px;"></div>
<div class="btn" style="left:903px;top:610px;width:50px;height:18px;line-height:17px;">Assign</div>
<div class="btn" style="left:776px;top:644px;width:70px;height:26px;line-height:25px;">Ok</div>
<div class="btn" style="left:852px;top:644px;width:69px;height:26px;line-height:25px;">Cancel</div>
<div class="t" style="left:1017px;top:621.8px;height:14px;line-height:14px;">For all objects of this</div>
<div class="t" style="left:1017px;top:635.3px;height:14px;line-height:14px;">prototype:</div>
<div class="btn" style="left:1016px;top:650px;width:127px;height:19px;line-height:18px;">Assign this command set</div>
<div class="dlg rp" style="left:1623px;top:34px;width:284px;height:515px;"></div>
<div class="title dark" style="left:1623px;top:34px;width:284px;height:14px;"></div>
<div class="t" style="left:1623px;top:34.8px;height:14px;line-height:14px;font-size:11px;color:#4a5464;width:284px;text-align:center;">Prototypes</div>
<div class="tbtn" style="left:1877px;top:36px;width:11px;height:11px;">?</div>
<div class="tbtn" style="left:1893px;top:36px;width:12px;height:11px;"></div>
<div class="btn tab" style="left:1626px;top:54px;width:70px;height:24px;line-height:23px;">Objects</div>
<div class="btn tabsel" style="left:1697px;top:54px;width:68px;height:24px;line-height:23px;font-size:10.8px;"><b>Vehicles</b></div>
<div class="btn tab" style="left:1766px;top:54px;width:68px;height:24px;line-height:23px;">Persons</div>
<div class="btn tab" style="left:1835px;top:54px;width:69px;height:24px;line-height:23px;">Houses</div>
<div class="t" style="left:1628px;top:81.8px;height:14px;line-height:14px;">Groups</div>
<div class="lst" style="left:1628px;top:97px;width:202px;height:86px;"></div>
<div class="selbar" style="left:1632px;top:99px;width:180px;height:13px;"></div>
<div class="t" style="left:1648px;top:98.5px;height:14px;line-height:14px;font-size:10.8px;font-weight:bold;color:#ffffff;">Feuerwehr</div>
<div class="uline" style="left:1632px;top:124.5px;width:11px;height:1.0px;"></div>
<div class="t" style="left:1646px;top:113.3px;height:14px;line-height:14px;">Flughafen Feuerwehr</div>
<div class="uline" style="left:1632px;top:138.5px;width:11px;height:1.0px;"></div>
<div class="t" style="left:1646px;top:127.3px;height:14px;line-height:14px;">Light Import</div>
<div class="uline" style="left:1632px;top:152.5px;width:11px;height:1.0px;"></div>
<div class="t" style="left:1646px;top:141.3px;height:14px;line-height:14px;">Netzbetreiber</div>
<div class="uline" style="left:1632px;top:166.5px;width:11px;height:1.0px;"></div>
<div class="t" style="left:1646px;top:155.3px;height:14px;line-height:14px;">Polizei</div>
<div class="t" style="left:1647px;top:169.3px;height:14px;line-height:14px;">TechOra</div>
<div class="vsb" style="left:1815px;top:99px;width:12px;height:83px;"></div>
<div class="thumbv" style="left:1816px;top:108px;width:10px;height:10px;"></div>
<div class="arru" style="left:1817.0px;top:102px"></div>
<div class="arr" style="left:1817.0px;top:174px"></div>
<div class="btn" style="left:1832px;top:98px;width:70px;height:25px;line-height:24px;">New</div>
<div class="row" style="left:1627px;top:202px;width:197px;height:26px;"></div>
<div class="t" style="left:1629px;top:206.0px;height:14px;line-height:14px;color:#202830;">00_99_01</div>
<div class="row" style="left:1627px;top:228px;width:197px;height:26px;"></div>
<div class="t" style="left:1629px;top:232.0px;height:14px;line-height:14px;color:#202830;">01_11_01</div>
<div class="row" style="left:1627px;top:254px;width:197px;height:26px;"></div>
<div class="t" style="left:1629px;top:258.0px;height:14px;line-height:14px;color:#202830;">01_11_01_DUMMY</div>
<div class="row" style="left:1627px;top:280px;width:197px;height:26px;"></div>
<div class="t" style="left:1629px;top:284.0px;height:14px;line-height:14px;color:#202830;">01_19_01</div>
<div class="row" style="left:1627px;top:306px;width:197px;height:26px;"></div>
<div class="t" style="left:1629px;top:310.0px;height:14px;line-height:14px;color:#202830;">01_33_01</div>
<div class="row" style="left:1627px;top:332px;width:197px;height:26px;"></div>
<div class="t" style="left:1629px;top:336.0px;height:14px;line-height:14px;color:#202830;">01_33_01</div>
<div class="row sel" style="left:1627px;top:358px;width:197px;height:26px;"></div>
<div class="t" style="left:1629px;top:362.0px;height:14px;line-height:14px;color:#d8dce0;">01_44_01</div>
<div class="row" style="left:1627px;top:384px;width:197px;height:26px;"></div>
<div class="t" style="left:1629px;top:388.0px;height:14px;line-height:14px;color:#202830;">01_46_01</div>
<div class="row" style="left:1627px;top:410px;width:197px;height:26px;"></div>
<div class="t" style="left:1629px;top:414.0px;height:14px;line-height:14px;color:#202830;">01_56_01</div>
<div class="row" style="left:1627px;top:436px;width:197px;height:26px;"></div>
<div class="t" style="left:1629px;top:440.0px;height:14px;line-height:14px;color:#202830;">01_58_01</div>
<div class="row" style="left:1627px;top:462px;width:197px;height:26px;"></div>
<div class="t" style="left:1629px;top:466.0px;height:14px;line-height:14px;color:#202830;">01_59_01_DUMMY</div>
<div class="row" style="left:1627px;top:488px;width:197px;height:26px;"></div>
<div class="t" style="left:1629px;top:492.0px;height:14px;line-height:14px;color:#202830;">01_74_01</div>
<div class="row" style="left:1627px;top:514px;width:197px;height:26px;"></div>
<div class="t" style="left:1629px;top:518.0px;height:14px;line-height:14px;color:#202830;">01_79_01</div>
<div class="row" style="left:1627px;top:540px;width:197px;height:5px;"></div>
<div class="vsb" style="left:1825px;top:201px;width:12px;height:343px;"></div>
<div class="thumbv" style="left:1826px;top:207px;width:10px;height:72px;"></div>
<div class="arru" style="left:1827.0px;top:204px"></div>
<div class="arr" style="left:1827.0px;top:536px"></div>
<div class="btn" style="left:1839px;top:202px;width:63px;height:25px;line-height:24px;">New</div>
<div class="btn" style="left:1839px;top:232px;width:63px;height:25px;line-height:24px;">Edit</div>
<div class="btn" style="left:1839px;top:262px;width:63px;height:25px;line-height:24px;">Clone</div>
<div class="cb" style="left:1841px;top:292px;width:11px;height:11px"></div>
<div class="t" style="left:1857px;top:291.3px;height:14px;line-height:14px;">Previews</div>
<div id="toolbar"></div>
<div class="t" style="left:5px;top:1040.8px;height:14px;line-height:14px;font-size:11.4px;color:#c4ccd0;">12:00:00</div>
<div class="hide" style="left:2px;top:1057px;width:80px;height:19px;"></div>
<div class="t" style="left:8px;top:1059.8px;height:14px;line-height:14px;"><u>H</u>ide/Show</div>
<div class="btn" style="left:87px;top:1058px;width:51px;height:19px;line-height:18px;">Delete</div>
<div class="btn" style="left:143px;top:1058px;width:45px;height:19px;line-height:18px;">Copy</div>
<div class="btn" style="left:193px;top:1058px;width:47px;height:19px;line-height:18px;">Paste</div>
<div class="btn" style="left:245px;top:1058px;width:69px;height:19px;line-height:18px;">Properties</div>
<div class="cb" style="left:320px;top:1060px;width:11px;height:11px"><span>&#x2715;</span></div>
<div class="t" style="left:337px;top:1059.8px;height:14px;line-height:14px;">Map/Cam bounds</div>
<div class="cb" style="left:428px;top:1060px;width:11px;height:11px"></div>
<div class="t" style="left:445px;top:1059.8px;height:14px;line-height:14px;">Snap Angles</div>
<div class="cb" style="left:512px;top:1060px;width:11px;height:11px"><span>&#x2715;</span></div>
<div class="t" style="left:529px;top:1059.8px;height:14px;line-height:14px;">AutoSave</div>
<div class="cb" style="left:584px;top:1060px;width:11px;height:11px"></div>
<div class="t" style="left:601px;top:1059.8px;height:14px;line-height:14px;">Loop Particles</div>
<div class="btn" style="left:675px;top:1058px;width:81px;height:19px;line-height:18px;">Lights: Off</div>
<div class="btn" style="left:762px;top:1058px;width:82px;height:19px;line-height:18px;">Reset Angles</div>
<div class="btn" style="left:850px;top:1058px;width:45px;height:19px;line-height:18px;">Undo</div>
<div class="btn" style="left:900px;top:1058px;width:45px;height:19px;line-height:18px;">Redo</div>
<svg width="14" height="22" style="position:absolute;left:1151px;top:557px"><path d="M1 1 L1 15 L4.5 11.5 L7.5 18 L9.5 17 L6.5 10.5 L11 10.5 Z" fill="#f0f4f8" stroke="#0a1418" stroke-width="1"/></svg>
</body></html>
